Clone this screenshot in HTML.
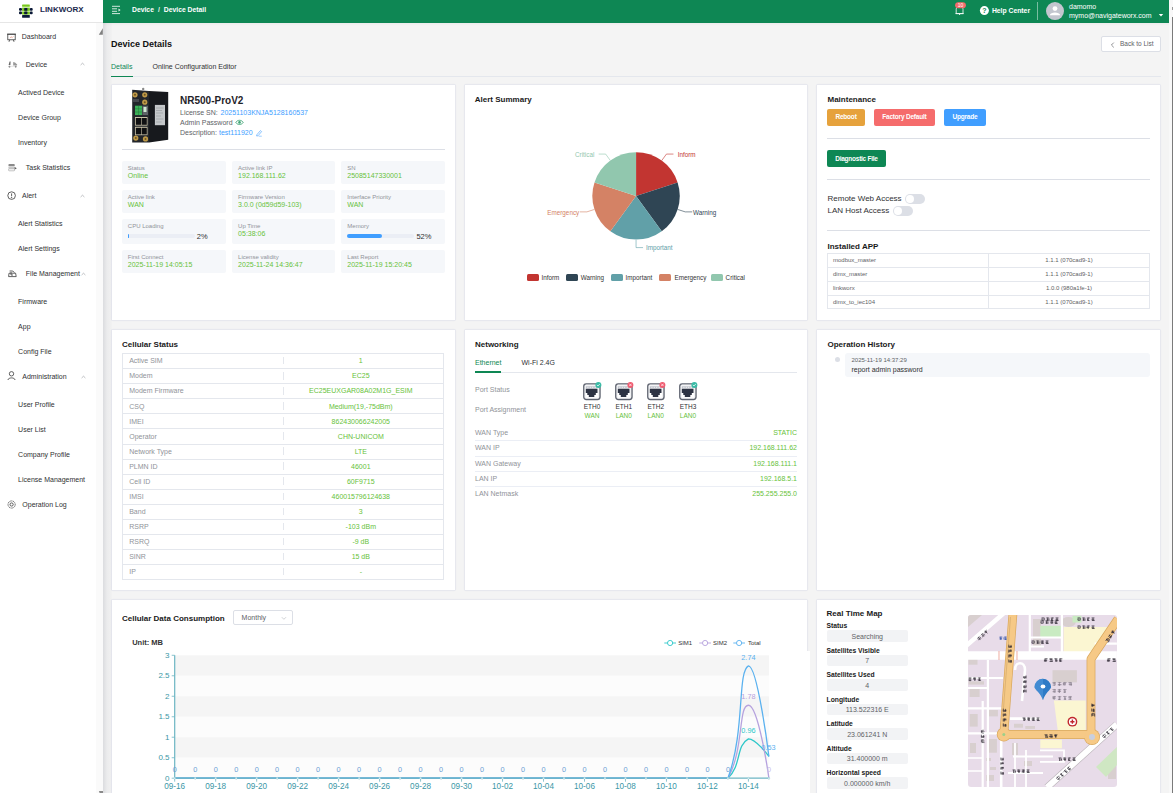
<!DOCTYPE html>
<html><head><meta charset="utf-8">
<style>
*{box-sizing:border-box;margin:0;padding:0}
html,body{width:1173px;height:793px;overflow:hidden;background:#f4f4f4;font-family:"Liberation Sans",sans-serif;color:#303133}
.a{position:absolute;white-space:nowrap}
svg{position:absolute;overflow:visible}
.card{position:absolute;background:#fff;box-shadow:0 0 0 0.5px rgba(195,200,230,.4),0 0 3px rgba(60,70,110,.06)}
</style></head>
<body>
<div class="a" style="left:103.00px;top:0.00px;width:1066.00px;height:793.00px;background:#f4f4f4;"></div>
<div class="a" style="left:103.00px;top:22.00px;width:8.50px;height:771.00px;background:linear-gradient(90deg,rgba(0,10,40,.1),rgba(0,10,40,.035) 45%,rgba(0,10,40,.01));"></div>
<div class="a" style="left:1169.00px;top:0.00px;width:4.00px;height:793.00px;background:#f8f8f8;"></div>
<div class="a" style="left:1172.00px;top:17.00px;width:1.00px;height:776.00px;background:#7a7a7a;"></div>
<div class="a" style="left:1172.00px;top:7.00px;width:1.00px;height:3.00px;background:#9a9a9a;"></div>
<div class="card" style="left:112px;top:85px;width:343px;height:235px"></div>
<div class="card" style="left:465px;top:85px;width:342px;height:235px"></div>
<div class="card" style="left:817px;top:85px;width:343px;height:235px"></div>
<div class="card" style="left:112px;top:330px;width:343px;height:260px"></div>
<div class="card" style="left:465px;top:330px;width:342px;height:260px"></div>
<div class="card" style="left:817px;top:330px;width:343px;height:260px"></div>
<div class="card" style="left:112px;top:600px;width:695px;height:200px"></div>
<div class="card" style="left:817px;top:600px;width:343px;height:200px"></div>
<div class="a" style="left:0.00px;top:0.00px;width:103.00px;height:793.00px;background:#fff;"></div>
<div class="a" style="left:0.00px;top:22.00px;width:103.00px;height:1.00px;background:#e6e6e6;"></div>
<div class="a" style="left:96.00px;top:23.00px;width:7.00px;height:770.00px;background:#fafafa;"></div>
<svg style="left:0;top:0" width="103" height="793"><path d="M102.8 28.2 L102.8 34.8 L98.8 34.8 Z" fill="#808080"/><path d="M98.9 790.9 H103 V793 H99.6 Z" fill="#8a8a8a"/></svg>
<svg style="left:0;top:0" width="40" height="22">
<rect x="22.1" y="4.4" width="7.7" height="2.4" rx="0.5" fill="#78c81a"/>
<rect x="22.1" y="7.6" width="7.7" height="7" fill="#78c81a"/>
<rect x="19" y="10.9" width="13.6" height="0.7" fill="#e8f5d8"/>
<rect x="19" y="8" width="3" height="2.8" rx="1.1" fill="#0a1838"/><rect x="24.2" y="8" width="3.2" height="2.8" rx="0.6" fill="#0a1838"/><rect x="29.8" y="8" width="2.9" height="2.8" rx="1.1" fill="#0a1838"/>
<rect x="19" y="11.6" width="3" height="2.7" rx="1.1" fill="#0a1838"/><rect x="24.2" y="11.6" width="3.2" height="2.7" rx="0.6" fill="#0a1838"/><rect x="29.8" y="11.6" width="2.9" height="2.7" rx="1.1" fill="#0a1838"/>
<rect x="22.1" y="15.1" width="7.7" height="2.7" rx="0.5" fill="#0a1838"/>
</svg>
<div class="a" style="left:40.00px;top:6.03px;font-size:8px;line-height:8px;color:#1b2a4e;font-weight:bold;">LINKWORX</div>
<div class="a" style="left:21.80px;top:33.02px;font-size:7px;line-height:7px;color:#303133;">Dashboard</div>
<div class="a" style="left:25.80px;top:60.92px;font-size:7px;line-height:7px;color:#303133;">Device</div>
<div class="a" style="left:18.10px;top:88.72px;font-size:7px;line-height:7px;color:#303133;">Actived Device</div>
<div class="a" style="left:18.10px;top:113.92px;font-size:7px;line-height:7px;color:#303133;">Device Group</div>
<div class="a" style="left:18.10px;top:138.92px;font-size:7px;line-height:7px;color:#303133;">Inventory</div>
<div class="a" style="left:25.80px;top:163.72px;font-size:7px;line-height:7px;color:#303133;">Task Statistics</div>
<div class="a" style="left:22.00px;top:192.12px;font-size:7px;line-height:7px;color:#303133;">Alert</div>
<div class="a" style="left:18.10px;top:220.12px;font-size:7px;line-height:7px;color:#303133;">Alert Statistics</div>
<div class="a" style="left:18.10px;top:245.12px;font-size:7px;line-height:7px;color:#303133;">Alert Settings</div>
<div class="a" style="left:25.80px;top:270.22px;font-size:7px;line-height:7px;color:#303133;">File Management</div>
<div class="a" style="left:18.10px;top:297.82px;font-size:7px;line-height:7px;color:#303133;">Firmware</div>
<div class="a" style="left:18.10px;top:323.22px;font-size:7px;line-height:7px;color:#303133;">App</div>
<div class="a" style="left:18.10px;top:348.22px;font-size:7px;line-height:7px;color:#303133;">Config File</div>
<div class="a" style="left:22.30px;top:373.22px;font-size:7px;line-height:7px;color:#303133;">Administration</div>
<div class="a" style="left:18.10px;top:400.82px;font-size:7px;line-height:7px;color:#303133;">User Profile</div>
<div class="a" style="left:18.10px;top:425.82px;font-size:7px;line-height:7px;color:#303133;">User List</div>
<div class="a" style="left:18.10px;top:450.72px;font-size:7px;line-height:7px;color:#303133;">Company Profile</div>
<div class="a" style="left:18.10px;top:475.72px;font-size:7px;line-height:7px;color:#303133;">License Management</div>
<div class="a" style="left:22.30px;top:501.02px;font-size:7px;line-height:7px;color:#303133;">Operation Log</div>
<svg style="left:80.3px;top:62.4px" width="5" height="4"><path d="M0.6 3 L2.5 1.2 L4.4 3" fill="none" stroke="#909399" stroke-width="0.6"/></svg>
<svg style="left:80.3px;top:193.6px" width="5" height="4"><path d="M0.6 3 L2.5 1.2 L4.4 3" fill="none" stroke="#909399" stroke-width="0.6"/></svg>
<svg style="left:80.5px;top:271.7px" width="5" height="4"><path d="M0.6 3 L2.5 1.2 L4.4 3" fill="none" stroke="#909399" stroke-width="0.6"/></svg>
<svg style="left:80.5px;top:374.7px" width="5" height="4"><path d="M0.6 3 L2.5 1.2 L4.4 3" fill="none" stroke="#909399" stroke-width="0.6"/></svg>
<svg style="left:0;top:0" width="20" height="520">
<g fill="none" stroke="#3a3a3a" stroke-width="0.8">
 <path d="M7 34.2 H16"/><rect x="7.8" y="34.2" width="7.4" height="5.6"/><path d="M9.6 39.8 L9 41.8 M13.4 39.8 L14 41.8"/><path d="M9.8 38 L11.2 36.8 L12.2 37.6 L13.4 36.4" stroke="#e07a5f" stroke-width="0.6"/>
 <path d="M9.6 61.4 L10.6 61.4 L10.4 65 L8.6 65 Z" fill="#666" stroke="none"/><circle cx="9.5" cy="66.6" r="0.9" fill="#555" stroke="none"/><path d="M13.2 62 L15 62.6 L17.2 64.4 L17 65.6 H13.2 Z" fill="#9a9a9a" stroke="none"/><circle cx="15.7" cy="66.6" r="0.9" fill="#555" stroke="none"/><path d="M8.6 66.3 H17" stroke="#d0d0d0" stroke-width="0.6"/>
 <rect x="8.4" y="163.9" width="6.4" height="2.4" rx="1" fill="#8a8a8a" stroke="none"/><rect x="8.4" y="166.6" width="6.4" height="2" fill="#c8c8c8" stroke="none"/><rect x="8.6" y="168.8" width="6" height="2" rx="0.6" fill="none" stroke="#9a9a9a" stroke-width="0.6"/><path d="M14.6 167 L16.8 168.3 L14.6 169.6 Z" fill="#555" stroke="none"/>
 <circle cx="11.6" cy="195.6" r="3.8"/><path d="M11.6 193.4 V196.2"/><circle cx="11.6" cy="197.6" r="0.3" fill="#3a3a3a"/>
 <path d="M9.6 271 H12.8 L14.4 272.6 M9 273.2 H15.6 L16.2 276.6 H8.6 Z"/><path d="M11 272 V275 L13 275" />
 <circle cx="11.5" cy="373.8" r="2.2"/><path d="M7.9 380 C8.2 377.2 14.8 377.2 15.1 380"/>
 <circle cx="11.6" cy="504.5" r="3.6" stroke-dasharray="1.2 0.6"/><circle cx="11.6" cy="504.5" r="1.6"/>
</g></svg>
<div class="a" style="left:103.00px;top:0.00px;width:1066.00px;height:22.60px;background:#0e8754;"></div>
<svg style="left:111px;top:5px" width="12" height="10"><g stroke="#e8f3ee" stroke-width="0.9"><path d="M1 1.3 H9 M1 3.8 H6 M1 6.3 H6 M1 8.6 H9"/></g><path d="M7.5 3.6 L9.6 5 L7.5 6.4 Z" fill="#e8f3ee"/></svg>
<div class="a" style="left:132.00px;top:7.24px;font-size:6.8px;line-height:6.8px;color:#ffffff;font-weight:bold;">Device</div>
<div class="a" style="left:158.00px;top:7.24px;font-size:6.8px;line-height:6.8px;color:#e6f2ec;font-weight:bold;">/</div>
<div class="a" style="left:163.80px;top:7.24px;font-size:6.8px;line-height:6.8px;color:#ffffff;font-weight:bold;">Device Detail</div>
<svg style="left:950px;top:0" width="20" height="20">
<path d="M6.2 13.6 V9.4 C6.2 7.6 7.6 6.8 9.6 6.8 C11.6 6.8 13 7.6 13 9.4 V13.6 Z" fill="none" stroke="#ffffff" stroke-width="0.8"/>
<path d="M5.4 13.6 H13.8" stroke="#ffffff" stroke-width="0.8"/><circle cx="9.6" cy="14.3" r="0.6" fill="#ffffff"/>
<rect x="5.1" y="2.2" width="10.8" height="6" rx="3" fill="#f26b6b"/>
<text x="10.5" y="7.1" font-size="5" font-family="Liberation Sans" fill="#fff" text-anchor="middle">10</text>
</svg>
<svg style="left:979px;top:5.4px" width="12" height="12"><circle cx="5.4" cy="5.6" r="4.5" fill="#fff"/>
<text x="5.4" y="8.1" font-size="7" font-family="Liberation Sans" font-weight="bold" fill="#0e8754" text-anchor="middle">?</text></svg>
<div class="a" style="left:991.90px;top:8.34px;font-size:6.8px;line-height:6.8px;color:#ffffff;font-weight:bold;">Help Center</div>
<div class="a" style="left:1037.20px;top:2.00px;width:0.80px;height:17.60px;background:rgba(255,255,255,.45);"></div>
<svg style="left:1045px;top:1px" width="20" height="20"><circle cx="10" cy="10.1" r="9" fill="#c3c6cf"/>
<circle cx="10" cy="7.6" r="2.4" fill="#fff"/><path d="M4.8 14.2 C5.4 10.6 14.6 10.6 15.2 14.2 Z" fill="#fff"/></svg>
<div class="a" style="left:1069.00px;top:3.07px;font-size:7px;line-height:7px;color:#ffffff;">damomo</div>
<div class="a" style="left:1069.00px;top:11.67px;font-size:7px;line-height:7px;color:#ffffff;">mymo@navigateworx.com</div>
<svg style="left:1158px;top:13px" width="6" height="4"><path d="M0.8 1 H5.2 L3 3.4 Z" fill="#fff"/></svg>
<div class="a" style="left:111.00px;top:39.98px;font-size:9px;line-height:9px;color:#111111;font-weight:bold;">Device Details</div>
<div class="a" style="left:111.00px;top:62.97px;font-size:7px;line-height:7px;color:#0e8754;">Details</div>
<div class="a" style="left:152.50px;top:62.97px;font-size:7px;line-height:7px;color:#303133;">Online Configuration Editor</div>
<div class="a" style="left:111.00px;top:76.00px;width:1049.50px;height:1.00px;background:#e4e7ed;"></div>
<div class="a" style="left:111.00px;top:75.50px;width:22.00px;height:1.60px;background:#0e8754;"></div>
<div class="a" style="left:1101.00px;top:36.20px;width:59.60px;height:16.20px;background:#fff;border:0.8px solid #dcdfe6;border-radius:2px"></div>
<svg style="left:1110px;top:41.6px" width="6" height="6"><path d="M3.8 0.6 L1.4 3 L3.8 5.4" fill="none" stroke="#606266" stroke-width="0.7"/></svg>
<div class="a" style="left:1120.00px;top:41.10px;font-size:6.5px;line-height:6.5px;color:#606266;">Back to List</div>
<div class="a" style="left:103.00px;top:22.60px;width:1066.00px;height:3.00px;background:linear-gradient(rgba(0,0,0,.035),rgba(0,0,0,0));"></div>
<svg style="left:126px;top:85px" width="48" height="62">
<path d="M23 5.9 L42.2 7 L42.2 54.7 L23 57.4 Z" fill="#17191d"/>
<path d="M6.2 4.7 L23 5.9 L23 57.4 L6.2 57.4 Z" fill="#23262b"/>
<rect x="28.9" y="19.9" width="10.1" height="20.3" fill="#c4c7ca"/>
<path d="M30 23 H37.6 M30 25.5 H36 M30 28 H37 M30 31 H35 M30 34 H37.4 M30 37 H35.6" stroke="#8a8d92" stroke-width="0.5"/>
<circle cx="17.2" cy="3.9" r="1.2" fill="#888"/>
<circle cx="9" cy="9.8" r="2.6" fill="#bf9a48"/><circle cx="18.75" cy="9.8" r="2.6" fill="#bf9a48"/><circle cx="18.75" cy="17.2" r="2.6" fill="#bf9a48"/>
<circle cx="9" cy="9.8" r="1" fill="#6e5524"/><circle cx="18.75" cy="9.8" r="1" fill="#6e5524"/><circle cx="18.75" cy="17.2" r="1" fill="#6e5524"/>
<path d="M8 14 V17 M10 14 V17 M12 14 V17" stroke="#9aa0a6" stroke-width="0.6"/>
<rect x="9" y="20.7" width="7" height="9.4" fill="#3cb35a"/><path d="M9 23.8 H16 M9 27 H16 M12.5 20.7 V30.1" stroke="#24743a" stroke-width="0.5"/>
<rect x="16.4" y="20.7" width="5.6" height="9.4" fill="#5f6368"/><rect x="17.5" y="22" width="3" height="5" fill="#cfe8d2"/>
<rect x="9" y="32" width="12.5" height="8.6" fill="#c9c2a8"/><rect x="9.8" y="33" width="5.2" height="6.8" fill="#0f1012"/><rect x="15.6" y="33" width="5.2" height="6.8" fill="#0f1012"/>
<rect x="9" y="41.8" width="12.5" height="8.4" fill="#c9c2a8"/><rect x="9.8" y="42.8" width="5.2" height="6.6" fill="#0f1012"/><rect x="15.6" y="42.8" width="5.2" height="6.6" fill="#0f1012"/>
<circle cx="9.8" cy="53.1" r="2.6" fill="#bf9a48"/><circle cx="19.5" cy="53.9" r="2.6" fill="#bf9a48"/>
<circle cx="9.8" cy="53.1" r="1" fill="#6e5524"/><circle cx="19.5" cy="53.9" r="1" fill="#6e5524"/>
</svg>
<div class="a" style="left:180.00px;top:95.73px;font-size:10px;line-height:10px;color:#1f2329;font-weight:bold;">NR500-ProV2</div>
<div class="a" style="left:180.00px;top:109.27px;font-size:7px;line-height:7px;color:#606266;">License SN: </div>
<div class="a" style="left:220.50px;top:109.27px;font-size:7px;line-height:7px;color:#409eff;">20251103KNJA5128160537</div>
<div class="a" style="left:180.00px;top:119.17px;font-size:7px;line-height:7px;color:#606266;">Admin Password</div>
<svg style="left:235px;top:119px" width="10" height="7"><path d="M0.8 3.4 C2.5 0.6 6.5 0.6 8.2 3.4 C6.5 6.2 2.5 6.2 0.8 3.4 Z" fill="none" stroke="#3ba272" stroke-width="0.9"/><circle cx="4.5" cy="3.4" r="1.3" fill="#3ba272"/></svg>
<div class="a" style="left:180.00px;top:129.27px;font-size:7px;line-height:7px;color:#606266;">Description: </div>
<div class="a" style="left:219.00px;top:129.27px;font-size:7px;line-height:7px;color:#409eff;">test111920</div>
<svg style="left:255px;top:128.5px" width="8" height="8"><path d="M1.8 5.8 L5.4 1.6 L6.6 2.6 L3 6.8 L1.6 7 Z" fill="none" stroke="#409eff" stroke-width="0.6"/><path d="M3.6 7.2 H6.8" stroke="#409eff" stroke-width="0.5"/></svg>
<div class="a" style="left:122.00px;top:148.80px;width:323.00px;height:1.00px;background:#dcdfe6;"></div>
<div class="a" style="left:121.80px;top:161.00px;width:104.00px;height:22.60px;background:#f5f7fa;border-radius:2px"></div>
<div class="a" style="left:127.80px;top:165.02px;font-size:6px;line-height:6px;color:#909399;">Status</div>
<div class="a" style="left:127.80px;top:172.17px;font-size:7px;line-height:7px;color:#67c23a;">Online</div>
<div class="a" style="left:232.10px;top:161.00px;width:102.60px;height:22.60px;background:#f5f7fa;border-radius:2px"></div>
<div class="a" style="left:238.10px;top:165.02px;font-size:6px;line-height:6px;color:#909399;">Active link IP</div>
<div class="a" style="left:238.10px;top:172.17px;font-size:7px;line-height:7px;color:#67c23a;">192.168.111.62</div>
<div class="a" style="left:341.30px;top:161.00px;width:103.50px;height:22.60px;background:#f5f7fa;border-radius:2px"></div>
<div class="a" style="left:347.30px;top:165.02px;font-size:6px;line-height:6px;color:#909399;">SN</div>
<div class="a" style="left:347.30px;top:172.17px;font-size:7px;line-height:7px;color:#67c23a;">25085147330001</div>
<div class="a" style="left:121.80px;top:190.00px;width:104.00px;height:22.60px;background:#f5f7fa;border-radius:2px"></div>
<div class="a" style="left:127.80px;top:194.02px;font-size:6px;line-height:6px;color:#909399;">Active link</div>
<div class="a" style="left:127.80px;top:201.17px;font-size:7px;line-height:7px;color:#67c23a;">WAN</div>
<div class="a" style="left:232.10px;top:190.00px;width:102.60px;height:22.60px;background:#f5f7fa;border-radius:2px"></div>
<div class="a" style="left:238.10px;top:194.02px;font-size:6px;line-height:6px;color:#909399;">Firmware Version</div>
<div class="a" style="left:238.10px;top:201.17px;font-size:7px;line-height:7px;color:#67c23a;">3.0.0 (0d59d59-103)</div>
<div class="a" style="left:341.30px;top:190.00px;width:103.50px;height:22.60px;background:#f5f7fa;border-radius:2px"></div>
<div class="a" style="left:347.30px;top:194.02px;font-size:6px;line-height:6px;color:#909399;">Interface Priority</div>
<div class="a" style="left:347.30px;top:201.17px;font-size:7px;line-height:7px;color:#67c23a;">WAN</div>
<div class="a" style="left:121.80px;top:219.00px;width:104.00px;height:24.70px;background:#f5f7fa;border-radius:2px"></div>
<div class="a" style="left:127.80px;top:223.02px;font-size:6px;line-height:6px;color:#909399;">CPU Loading</div>
<div class="a" style="left:232.10px;top:219.00px;width:102.60px;height:24.70px;background:#f5f7fa;border-radius:2px"></div>
<div class="a" style="left:238.10px;top:223.02px;font-size:6px;line-height:6px;color:#909399;">Up Time</div>
<div class="a" style="left:238.10px;top:230.17px;font-size:7px;line-height:7px;color:#67c23a;">05:38:06</div>
<div class="a" style="left:341.30px;top:219.00px;width:103.50px;height:24.70px;background:#f5f7fa;border-radius:2px"></div>
<div class="a" style="left:347.30px;top:223.02px;font-size:6px;line-height:6px;color:#909399;">Memory</div>
<div class="a" style="left:121.80px;top:250.00px;width:104.00px;height:22.60px;background:#f5f7fa;border-radius:2px"></div>
<div class="a" style="left:127.80px;top:254.02px;font-size:6px;line-height:6px;color:#909399;">First Connect</div>
<div class="a" style="left:127.80px;top:261.17px;font-size:7px;line-height:7px;color:#67c23a;">2025-11-19 14:05:15</div>
<div class="a" style="left:232.10px;top:250.00px;width:102.60px;height:22.60px;background:#f5f7fa;border-radius:2px"></div>
<div class="a" style="left:238.10px;top:254.02px;font-size:6px;line-height:6px;color:#909399;">License validity</div>
<div class="a" style="left:238.10px;top:261.17px;font-size:7px;line-height:7px;color:#67c23a;">2025-11-24 14:36:47</div>
<div class="a" style="left:341.30px;top:250.00px;width:103.50px;height:22.60px;background:#f5f7fa;border-radius:2px"></div>
<div class="a" style="left:347.30px;top:254.02px;font-size:6px;line-height:6px;color:#909399;">Last Report</div>
<div class="a" style="left:347.30px;top:261.17px;font-size:7px;line-height:7px;color:#67c23a;">2025-11-19 15:20:45</div>
<div class="a" style="left:127.80px;top:234.00px;width:67.00px;height:4.00px;background:#ebeef5;border-radius:2px"></div>
<div class="a" style="left:127.80px;top:234.00px;width:1.40px;height:4.00px;background:#409eff;border-radius:2px"></div>
<div class="a" style="left:196.80px;top:233.05px;font-size:7.5px;line-height:7.5px;color:#303133;">2%</div>
<div class="a" style="left:347.00px;top:234.00px;width:67.00px;height:4.00px;background:#ebeef5;border-radius:2px"></div>
<div class="a" style="left:347.00px;top:234.00px;width:35.00px;height:4.00px;background:#409eff;border-radius:2px"></div>
<div class="a" style="left:416.40px;top:233.05px;font-size:7.5px;line-height:7.5px;color:#303133;">52%</div>
<div class="a" style="left:474.80px;top:95.63px;font-size:8px;line-height:8px;color:#1a1a1a;font-weight:bold;">Alert Summary</div>
<svg style="left:0;top:0" width="1173" height="793"><path d="M636.05 195.90 L636.05 152.20 A43.7 43.7 0 0 1 677.61 182.40 Z" fill="#c23531" stroke="none"/><path d="M636.05 195.90 L677.61 182.40 A43.7 43.7 0 0 1 661.74 231.25 Z" fill="#2f4554" stroke="none"/><path d="M636.05 195.90 L661.74 231.25 A43.7 43.7 0 0 1 610.36 231.25 Z" fill="#61a0a8" stroke="none"/><path d="M636.05 195.90 L610.36 231.25 A43.7 43.7 0 0 1 594.49 182.40 Z" fill="#d48265" stroke="none"/><path d="M636.05 195.90 L594.49 182.40 A43.7 43.7 0 0 1 636.05 152.20 Z" fill="#91c7ae" stroke="none"/><path d="M661.91 160.30 L666.44 154.07 L673.44 154.07" fill="none" stroke="#c23531" stroke-width="0.6"/><path d="M677.90 209.50 L685.22 211.88 L692.22 211.88" fill="none" stroke="#2f4554" stroke-width="0.6"/><path d="M636.05 239.90 L636.05 247.60 L643.05 247.60" fill="none" stroke="#61a0a8" stroke-width="0.6"/><path d="M594.20 209.50 L586.88 211.88 L579.88 211.88" fill="none" stroke="#d48265" stroke-width="0.6"/><path d="M610.19 160.30 L605.66 154.07 L598.66 154.07" fill="none" stroke="#91c7ae" stroke-width="0.6"/></svg>
<div class="a" style="left:677.70px;top:152.47px;font-size:6.3px;line-height:6.3px;color:#c23531;">Inform</div>
<div class="a" style="left:693.00px;top:209.77px;font-size:6.3px;line-height:6.3px;color:#2f4554;">Warning</div>
<div class="a" style="left:646.00px;top:244.87px;font-size:6.3px;line-height:6.3px;color:#61a0a8;">Important</div>
<div class="a" style="left:519.20px;width:60px;text-align:right;top:209.77px;font-size:6.3px;line-height:6.3px;color:#d48265;">Emergency</div>
<div class="a" style="left:534.30px;width:60px;text-align:right;top:152.47px;font-size:6.3px;line-height:6.3px;color:#91c7ae;">Critical</div>
<div class="a" style="left:526.90px;top:274.30px;width:12.00px;height:7.00px;background:#c23531;border-radius:1.5px"></div>
<div class="a" style="left:541.40px;top:274.87px;font-size:6.3px;line-height:6.3px;color:#333333;">Inform</div>
<div class="a" style="left:566.30px;top:274.30px;width:12.00px;height:7.00px;background:#2f4554;border-radius:1.5px"></div>
<div class="a" style="left:580.80px;top:274.87px;font-size:6.3px;line-height:6.3px;color:#333333;">Warning</div>
<div class="a" style="left:610.50px;top:274.30px;width:12.00px;height:7.00px;background:#61a0a8;border-radius:1.5px"></div>
<div class="a" style="left:625.60px;top:274.87px;font-size:6.3px;line-height:6.3px;color:#333333;">Important</div>
<div class="a" style="left:659.40px;top:274.30px;width:12.00px;height:7.00px;background:#d48265;border-radius:1.5px"></div>
<div class="a" style="left:674.50px;top:274.87px;font-size:6.3px;line-height:6.3px;color:#333333;">Emergency</div>
<div class="a" style="left:711.00px;top:274.30px;width:12.00px;height:7.00px;background:#91c7ae;border-radius:1.5px"></div>
<div class="a" style="left:725.60px;top:274.87px;font-size:6.3px;line-height:6.3px;color:#333333;">Critical</div>
<div class="a" style="left:827.50px;top:95.63px;font-size:8px;line-height:8px;color:#1a1a1a;font-weight:bold;">Maintenance</div>
<div class="a" style="left:827.20px;top:109.20px;width:37.60px;height:16.40px;background:#e6a23c;border-radius:2px"></div>
<div class="a" style="left:806.00px;width:80px;text-align:center;top:114.00px;font-size:6.5px;line-height:6.5px;color:#ffffff;font-weight:bold;letter-spacing:-0.2px;">Reboot</div>
<div class="a" style="left:874.00px;top:109.20px;width:60.90px;height:16.40px;background:#f56c6c;border-radius:2px"></div>
<div class="a" style="left:864.45px;width:80px;text-align:center;top:114.00px;font-size:6.5px;line-height:6.5px;color:#ffffff;font-weight:bold;letter-spacing:-0.2px;">Factory Default</div>
<div class="a" style="left:944.10px;top:109.20px;width:41.60px;height:16.40px;background:#409eff;border-radius:2px"></div>
<div class="a" style="left:924.90px;width:80px;text-align:center;top:114.00px;font-size:6.5px;line-height:6.5px;color:#ffffff;font-weight:bold;letter-spacing:-0.2px;">Upgrade</div>
<div class="a" style="left:827.00px;top:137.80px;width:323.00px;height:0.80px;background:#dcdfe6;"></div>
<div class="a" style="left:827.20px;top:150.10px;width:58.60px;height:16.60px;background:#0e8754;border-radius:2px"></div>
<div class="a" style="left:816.50px;width:80px;text-align:center;top:155.70px;font-size:6.5px;line-height:6.5px;color:#ffffff;font-weight:bold;letter-spacing:-0.25px;">Diagnostic File</div>
<div class="a" style="left:827.00px;top:178.60px;width:323.00px;height:0.80px;background:#dcdfe6;"></div>
<div class="a" style="left:827.50px;top:194.93px;font-size:8px;line-height:8px;color:#303133;">Remote Web Access</div>
<div class="a" style="left:827.50px;top:207.03px;font-size:8px;line-height:8px;color:#303133;">LAN Host Access</div>
<div class="a" style="left:905.40px;top:194.20px;width:19.60px;height:9.60px;background:#dcdfe6;border-radius:5px"></div>
<div class="a" style="left:906.30px;top:195.10px;width:7.8px;height:7.8px;border-radius:50%;background:#fff"></div>
<div class="a" style="left:893.00px;top:206.10px;width:19.60px;height:9.60px;background:#dcdfe6;border-radius:5px"></div>
<div class="a" style="left:893.90px;top:207.00px;width:7.8px;height:7.8px;border-radius:50%;background:#fff"></div>
<div class="a" style="left:827.00px;top:229.80px;width:323.00px;height:0.80px;background:#dcdfe6;"></div>
<div class="a" style="left:827.50px;top:242.93px;font-size:8px;line-height:8px;color:#1a1a1a;font-weight:bold;">Installed APP</div>
<div class="a" style="left:827.10px;top:253.20px;width:322.50px;height:56.20px;background:#fff;border:0.8px solid #e4e7ed"></div>
<div class="a" style="left:827.10px;top:267.30px;width:322.50px;height:0.80px;background:#e4e7ed;"></div>
<div class="a" style="left:827.10px;top:281.30px;width:322.50px;height:0.80px;background:#e4e7ed;"></div>
<div class="a" style="left:827.10px;top:295.30px;width:322.50px;height:0.80px;background:#e4e7ed;"></div>
<div class="a" style="left:988.30px;top:253.20px;width:0.80px;height:56.20px;background:#e4e7ed;"></div>
<div class="a" style="left:833.00px;top:257.22px;font-size:6px;line-height:6px;color:#606266;">modbux_master</div>
<div class="a" style="left:1019.00px;width:100px;text-align:center;top:257.22px;font-size:6px;line-height:6px;color:#606266;">1.1.1 (070cad9-1)</div>
<div class="a" style="left:833.00px;top:271.27px;font-size:6px;line-height:6px;color:#606266;">dimx_master</div>
<div class="a" style="left:1019.00px;width:100px;text-align:center;top:271.27px;font-size:6px;line-height:6px;color:#606266;">1.1.1 (070cad9-1)</div>
<div class="a" style="left:833.00px;top:285.32px;font-size:6px;line-height:6px;color:#606266;">linkworx</div>
<div class="a" style="left:1019.00px;width:100px;text-align:center;top:285.32px;font-size:6px;line-height:6px;color:#606266;">1.0.0 (980a1fe-1)</div>
<div class="a" style="left:833.00px;top:299.37px;font-size:6px;line-height:6px;color:#606266;">dimx_to_iec104</div>
<div class="a" style="left:1019.00px;width:100px;text-align:center;top:299.37px;font-size:6px;line-height:6px;color:#606266;">1.1.1 (070cad9-1)</div>
<div class="a" style="left:122.00px;top:340.73px;font-size:8px;line-height:8px;color:#1a1a1a;font-weight:bold;">Cellular Status</div>
<div class="a" style="left:122.30px;top:353.10px;width:322.20px;height:226.85px;background:#fff;border:0.8px solid #e4e7ed"></div>
<div class="a" style="left:283.10px;top:356.90px;width:0.70px;height:7.60px;background:#e4e7ed;"></div>
<div class="a" style="left:129.20px;top:357.31px;font-size:7px;line-height:7px;color:#909399;">Active SIM</div>
<div class="a" style="left:280.80px;width:160px;text-align:center;top:357.31px;font-size:7px;line-height:7px;color:#67c23a;">1</div>
<div class="a" style="left:122.30px;top:368.17px;width:322.20px;height:0.80px;background:#e4e7ed;"></div>
<div class="a" style="left:283.10px;top:371.97px;width:0.70px;height:7.60px;background:#e4e7ed;"></div>
<div class="a" style="left:129.20px;top:372.38px;font-size:7px;line-height:7px;color:#909399;">Modem</div>
<div class="a" style="left:280.80px;width:160px;text-align:center;top:372.38px;font-size:7px;line-height:7px;color:#67c23a;">EC25</div>
<div class="a" style="left:122.30px;top:383.24px;width:322.20px;height:0.80px;background:#e4e7ed;"></div>
<div class="a" style="left:283.10px;top:387.04px;width:0.70px;height:7.60px;background:#e4e7ed;"></div>
<div class="a" style="left:129.20px;top:387.45px;font-size:7px;line-height:7px;color:#909399;">Modem Firmware</div>
<div class="a" style="left:280.80px;width:160px;text-align:center;top:387.45px;font-size:7px;line-height:7px;color:#67c23a;">EC25EUXGAR08A02M1G_ESIM</div>
<div class="a" style="left:122.30px;top:398.31px;width:322.20px;height:0.80px;background:#e4e7ed;"></div>
<div class="a" style="left:283.10px;top:402.11px;width:0.70px;height:7.60px;background:#e4e7ed;"></div>
<div class="a" style="left:129.20px;top:402.52px;font-size:7px;line-height:7px;color:#909399;">CSQ</div>
<div class="a" style="left:280.80px;width:160px;text-align:center;top:402.52px;font-size:7px;line-height:7px;color:#67c23a;">Medium(19,-75dBm)</div>
<div class="a" style="left:122.30px;top:413.38px;width:322.20px;height:0.80px;background:#e4e7ed;"></div>
<div class="a" style="left:283.10px;top:417.18px;width:0.70px;height:7.60px;background:#e4e7ed;"></div>
<div class="a" style="left:129.20px;top:417.59px;font-size:7px;line-height:7px;color:#909399;">IMEI</div>
<div class="a" style="left:280.80px;width:160px;text-align:center;top:417.59px;font-size:7px;line-height:7px;color:#67c23a;">862430066242005</div>
<div class="a" style="left:122.30px;top:428.45px;width:322.20px;height:0.80px;background:#e4e7ed;"></div>
<div class="a" style="left:283.10px;top:432.25px;width:0.70px;height:7.60px;background:#e4e7ed;"></div>
<div class="a" style="left:129.20px;top:432.66px;font-size:7px;line-height:7px;color:#909399;">Operator</div>
<div class="a" style="left:280.80px;width:160px;text-align:center;top:432.66px;font-size:7px;line-height:7px;color:#67c23a;">CHN-UNICOM</div>
<div class="a" style="left:122.30px;top:443.52px;width:322.20px;height:0.80px;background:#e4e7ed;"></div>
<div class="a" style="left:283.10px;top:447.32px;width:0.70px;height:7.60px;background:#e4e7ed;"></div>
<div class="a" style="left:129.20px;top:447.73px;font-size:7px;line-height:7px;color:#909399;">Network Type</div>
<div class="a" style="left:280.80px;width:160px;text-align:center;top:447.73px;font-size:7px;line-height:7px;color:#67c23a;">LTE</div>
<div class="a" style="left:122.30px;top:458.59px;width:322.20px;height:0.80px;background:#e4e7ed;"></div>
<div class="a" style="left:283.10px;top:462.39px;width:0.70px;height:7.60px;background:#e4e7ed;"></div>
<div class="a" style="left:129.20px;top:462.80px;font-size:7px;line-height:7px;color:#909399;">PLMN ID</div>
<div class="a" style="left:280.80px;width:160px;text-align:center;top:462.80px;font-size:7px;line-height:7px;color:#67c23a;">46001</div>
<div class="a" style="left:122.30px;top:473.66px;width:322.20px;height:0.80px;background:#e4e7ed;"></div>
<div class="a" style="left:283.10px;top:477.46px;width:0.70px;height:7.60px;background:#e4e7ed;"></div>
<div class="a" style="left:129.20px;top:477.87px;font-size:7px;line-height:7px;color:#909399;">Cell ID</div>
<div class="a" style="left:280.80px;width:160px;text-align:center;top:477.87px;font-size:7px;line-height:7px;color:#67c23a;">60F9715</div>
<div class="a" style="left:122.30px;top:488.73px;width:322.20px;height:0.80px;background:#e4e7ed;"></div>
<div class="a" style="left:283.10px;top:492.53px;width:0.70px;height:7.60px;background:#e4e7ed;"></div>
<div class="a" style="left:129.20px;top:492.94px;font-size:7px;line-height:7px;color:#909399;">IMSI</div>
<div class="a" style="left:280.80px;width:160px;text-align:center;top:492.94px;font-size:7px;line-height:7px;color:#67c23a;">460015796124638</div>
<div class="a" style="left:122.30px;top:503.80px;width:322.20px;height:0.80px;background:#e4e7ed;"></div>
<div class="a" style="left:283.10px;top:507.60px;width:0.70px;height:7.60px;background:#e4e7ed;"></div>
<div class="a" style="left:129.20px;top:508.01px;font-size:7px;line-height:7px;color:#909399;">Band</div>
<div class="a" style="left:280.80px;width:160px;text-align:center;top:508.01px;font-size:7px;line-height:7px;color:#67c23a;">3</div>
<div class="a" style="left:122.30px;top:518.87px;width:322.20px;height:0.80px;background:#e4e7ed;"></div>
<div class="a" style="left:283.10px;top:522.67px;width:0.70px;height:7.60px;background:#e4e7ed;"></div>
<div class="a" style="left:129.20px;top:523.08px;font-size:7px;line-height:7px;color:#909399;">RSRP</div>
<div class="a" style="left:280.80px;width:160px;text-align:center;top:523.08px;font-size:7px;line-height:7px;color:#67c23a;">-103 dBm</div>
<div class="a" style="left:122.30px;top:533.94px;width:322.20px;height:0.80px;background:#e4e7ed;"></div>
<div class="a" style="left:283.10px;top:537.74px;width:0.70px;height:7.60px;background:#e4e7ed;"></div>
<div class="a" style="left:129.20px;top:538.15px;font-size:7px;line-height:7px;color:#909399;">RSRQ</div>
<div class="a" style="left:280.80px;width:160px;text-align:center;top:538.15px;font-size:7px;line-height:7px;color:#67c23a;">-9 dB</div>
<div class="a" style="left:122.30px;top:549.01px;width:322.20px;height:0.80px;background:#e4e7ed;"></div>
<div class="a" style="left:283.10px;top:552.81px;width:0.70px;height:7.60px;background:#e4e7ed;"></div>
<div class="a" style="left:129.20px;top:553.22px;font-size:7px;line-height:7px;color:#909399;">SINR</div>
<div class="a" style="left:280.80px;width:160px;text-align:center;top:553.22px;font-size:7px;line-height:7px;color:#67c23a;">15 dB</div>
<div class="a" style="left:122.30px;top:564.08px;width:322.20px;height:0.80px;background:#e4e7ed;"></div>
<div class="a" style="left:283.10px;top:567.88px;width:0.70px;height:7.60px;background:#e4e7ed;"></div>
<div class="a" style="left:129.20px;top:568.29px;font-size:7px;line-height:7px;color:#909399;">IP</div>
<div class="a" style="left:280.80px;width:160px;text-align:center;top:568.29px;font-size:7px;line-height:7px;color:#67c23a;">-</div>
<div class="a" style="left:475.00px;top:341.03px;font-size:8px;line-height:8px;color:#1a1a1a;font-weight:bold;">Networking</div>
<div class="a" style="left:475.00px;top:359.07px;font-size:7px;line-height:7px;color:#0e8754;">Ethernet</div>
<div class="a" style="left:521.50px;top:359.07px;font-size:7px;line-height:7px;color:#303133;">Wi-Fi 2.4G</div>
<div class="a" style="left:475.00px;top:371.80px;width:322.00px;height:0.90px;background:#e4e7ed;"></div>
<div class="a" style="left:475.00px;top:371.40px;width:26.40px;height:1.50px;background:#0e8754;"></div>
<div class="a" style="left:475.00px;top:386.07px;font-size:7px;line-height:7px;color:#909399;">Port Status</div>
<div class="a" style="left:475.00px;top:406.07px;font-size:7px;line-height:7px;color:#909399;">Port Assignment</div>
<svg style="left:583.20px;top:382.6px" width="22" height="18">
<rect x="0.8" y="0.9" width="16.2" height="15.6" rx="2.4" fill="#fff" stroke="#5f6470" stroke-width="1.4"/>
<rect x="2.1" y="2.2" width="13.6" height="13" rx="1" fill="none" stroke="#dcdee4" stroke-width="0.5"/>
<rect x="2.8" y="3.2" width="11.7" height="2.2" fill="#c3c6ce"/>
<circle cx="4.9" cy="4.3" r="0.55" fill="#fff"/><circle cx="7.3" cy="4.3" r="0.55" fill="#fff"/><circle cx="9.7" cy="4.3" r="0.55" fill="#fff"/><circle cx="12.2" cy="4.3" r="0.55" fill="#fff"/>
<path d="M2.8 5.7 H14.5 V9.9 H12.8 V11.9 H11.3 V13.9 H5.8 V11.9 H4.3 V9.9 H2.8 Z" fill="#2d3343"/>
<circle cx="15.4" cy="1.9" r="3" fill="#3bbba6"/>
<path d="M13.9 1.9 L15 3 L16.9 0.9" fill="none" stroke="#fff" stroke-width="0.7"/>
</svg>
<div class="a" style="left:577.00px;width:30px;text-align:center;top:403.90px;font-size:6.5px;line-height:6.5px;color:#303133;">ETH0</div>
<div class="a" style="left:577.00px;width:30px;text-align:center;top:412.90px;font-size:6.5px;line-height:6.5px;color:#67c23a;">WAN</div>
<svg style="left:615.00px;top:382.6px" width="22" height="18">
<rect x="0.8" y="0.9" width="16.2" height="15.6" rx="2.4" fill="#fff" stroke="#5f6470" stroke-width="1.4"/>
<rect x="2.1" y="2.2" width="13.6" height="13" rx="1" fill="none" stroke="#dcdee4" stroke-width="0.5"/>
<rect x="2.8" y="3.2" width="11.7" height="2.2" fill="#c3c6ce"/>
<circle cx="4.9" cy="4.3" r="0.55" fill="#fff"/><circle cx="7.3" cy="4.3" r="0.55" fill="#fff"/><circle cx="9.7" cy="4.3" r="0.55" fill="#fff"/><circle cx="12.2" cy="4.3" r="0.55" fill="#fff"/>
<path d="M2.8 5.7 H14.5 V9.9 H12.8 V11.9 H11.3 V13.9 H5.8 V11.9 H4.3 V9.9 H2.8 Z" fill="#2d3343"/>
<circle cx="15.4" cy="1.9" r="3" fill="#ef5a6f"/>
<path d="M14.2 0.7 L16.6 3.1 M16.6 0.7 L14.2 3.1" fill="none" stroke="#fff" stroke-width="0.7"/>
</svg>
<div class="a" style="left:608.80px;width:30px;text-align:center;top:403.90px;font-size:6.5px;line-height:6.5px;color:#303133;">ETH1</div>
<div class="a" style="left:608.80px;width:30px;text-align:center;top:412.90px;font-size:6.5px;line-height:6.5px;color:#67c23a;">LAN0</div>
<svg style="left:646.90px;top:382.6px" width="22" height="18">
<rect x="0.8" y="0.9" width="16.2" height="15.6" rx="2.4" fill="#fff" stroke="#5f6470" stroke-width="1.4"/>
<rect x="2.1" y="2.2" width="13.6" height="13" rx="1" fill="none" stroke="#dcdee4" stroke-width="0.5"/>
<rect x="2.8" y="3.2" width="11.7" height="2.2" fill="#c3c6ce"/>
<circle cx="4.9" cy="4.3" r="0.55" fill="#fff"/><circle cx="7.3" cy="4.3" r="0.55" fill="#fff"/><circle cx="9.7" cy="4.3" r="0.55" fill="#fff"/><circle cx="12.2" cy="4.3" r="0.55" fill="#fff"/>
<path d="M2.8 5.7 H14.5 V9.9 H12.8 V11.9 H11.3 V13.9 H5.8 V11.9 H4.3 V9.9 H2.8 Z" fill="#2d3343"/>
<circle cx="15.4" cy="1.9" r="3" fill="#ef5a6f"/>
<path d="M14.2 0.7 L16.6 3.1 M16.6 0.7 L14.2 3.1" fill="none" stroke="#fff" stroke-width="0.7"/>
</svg>
<div class="a" style="left:640.70px;width:30px;text-align:center;top:403.90px;font-size:6.5px;line-height:6.5px;color:#303133;">ETH2</div>
<div class="a" style="left:640.70px;width:30px;text-align:center;top:412.90px;font-size:6.5px;line-height:6.5px;color:#67c23a;">LAN0</div>
<svg style="left:679.20px;top:382.6px" width="22" height="18">
<rect x="0.8" y="0.9" width="16.2" height="15.6" rx="2.4" fill="#fff" stroke="#5f6470" stroke-width="1.4"/>
<rect x="2.1" y="2.2" width="13.6" height="13" rx="1" fill="none" stroke="#dcdee4" stroke-width="0.5"/>
<rect x="2.8" y="3.2" width="11.7" height="2.2" fill="#c3c6ce"/>
<circle cx="4.9" cy="4.3" r="0.55" fill="#fff"/><circle cx="7.3" cy="4.3" r="0.55" fill="#fff"/><circle cx="9.7" cy="4.3" r="0.55" fill="#fff"/><circle cx="12.2" cy="4.3" r="0.55" fill="#fff"/>
<path d="M2.8 5.7 H14.5 V9.9 H12.8 V11.9 H11.3 V13.9 H5.8 V11.9 H4.3 V9.9 H2.8 Z" fill="#2d3343"/>
<circle cx="15.4" cy="1.9" r="3" fill="#3bbba6"/>
<path d="M13.9 1.9 L15 3 L16.9 0.9" fill="none" stroke="#fff" stroke-width="0.7"/>
</svg>
<div class="a" style="left:673.00px;width:30px;text-align:center;top:403.90px;font-size:6.5px;line-height:6.5px;color:#303133;">ETH3</div>
<div class="a" style="left:673.00px;width:30px;text-align:center;top:412.90px;font-size:6.5px;line-height:6.5px;color:#67c23a;">LAN0</div>
<div class="a" style="left:475.00px;top:429.07px;font-size:7px;line-height:7px;color:#909399;">WAN Type</div>
<div class="a" style="left:697.00px;width:100px;text-align:right;top:429.07px;font-size:7px;line-height:7px;color:#67c23a;">STATIC</div>
<div class="a" style="left:475.00px;top:444.07px;font-size:7px;line-height:7px;color:#909399;">WAN IP</div>
<div class="a" style="left:697.00px;width:100px;text-align:right;top:444.07px;font-size:7px;line-height:7px;color:#67c23a;">192.168.111.62</div>
<div class="a" style="left:475.00px;top:459.87px;font-size:7px;line-height:7px;color:#909399;">WAN Gateway</div>
<div class="a" style="left:697.00px;width:100px;text-align:right;top:459.87px;font-size:7px;line-height:7px;color:#67c23a;">192.168.111.1</div>
<div class="a" style="left:475.00px;top:475.07px;font-size:7px;line-height:7px;color:#909399;">LAN IP</div>
<div class="a" style="left:697.00px;width:100px;text-align:right;top:475.07px;font-size:7px;line-height:7px;color:#67c23a;">192.168.5.1</div>
<div class="a" style="left:475.00px;top:489.97px;font-size:7px;line-height:7px;color:#909399;">LAN Netmask</div>
<div class="a" style="left:697.00px;width:100px;text-align:right;top:489.97px;font-size:7px;line-height:7px;color:#67c23a;">255.255.255.0</div>
<div class="a" style="left:475.00px;top:440.20px;width:322.00px;height:0.80px;background:#ebeef5;"></div>
<div class="a" style="left:475.00px;top:455.80px;width:322.00px;height:0.80px;background:#ebeef5;"></div>
<div class="a" style="left:475.00px;top:471.30px;width:322.00px;height:0.80px;background:#ebeef5;"></div>
<div class="a" style="left:475.00px;top:486.10px;width:322.00px;height:0.80px;background:#ebeef5;"></div>
<div class="a" style="left:827.50px;top:340.73px;font-size:8px;line-height:8px;color:#1a1a1a;font-weight:bold;">Operation History</div>
<div class="a" style="left:835px;top:357px;width:5.2px;height:5.2px;border-radius:50%;background:#dcdfe6"></div>
<div class="a" style="left:845.30px;top:353.30px;width:304.50px;height:24.00px;background:#f5f7fa;border-radius:3px"></div>
<div class="a" style="left:851.50px;top:356.72px;font-size:6px;line-height:6px;color:#606266;">2025-11-19 14:37:29</div>
<div class="a" style="left:851.50px;top:366.17px;font-size:7px;line-height:7px;color:#303133;">report admin password</div>
<div class="a" style="left:122.00px;top:614.83px;font-size:8px;line-height:8px;color:#1a1a1a;font-weight:bold;">Cellular Data Consumption</div>
<div class="a" style="left:233.30px;top:610.30px;width:59.50px;height:15.00px;background:#fff;border:0.8px solid #dcdfe6;border-radius:2px"></div>
<div class="a" style="left:241.60px;top:614.37px;font-size:7px;line-height:7px;color:#606266;">Monthly</div>
<svg style="left:281px;top:615.5px" width="6" height="5"><path d="M0.8 1.2 L2.9 3.3 L5 1.2" fill="none" stroke="#b0b3b9" stroke-width="0.6"/></svg>
<div class="a" style="left:807.00px;top:650.50px;width:3.00px;height:143.00px;background:#ffffff;"></div>
<div class="a" style="left:132.20px;top:639.25px;font-size:7.5px;line-height:7.5px;color:#333333;font-weight:bold;">Unit: MB</div>
<svg style="left:0;top:0" width="1173" height="793"><rect x="174.70" y="655.29" width="594.21" height="20.49" fill="#f5f5f5"/><rect x="174.70" y="675.78" width="594.21" height="20.48" fill="#fcfcfc"/><rect x="174.70" y="696.26" width="594.21" height="20.49" fill="#f5f5f5"/><rect x="174.70" y="716.75" width="594.21" height="20.49" fill="#fcfcfc"/><rect x="174.70" y="737.23" width="594.21" height="20.49" fill="#f5f5f5"/><rect x="174.70" y="757.72" width="594.21" height="20.49" fill="#fcfcfc"/><path d="M171.70 778.20 H174.70" stroke="#6db5c3" stroke-width="0.8"/><path d="M171.70 757.72 H174.70" stroke="#6db5c3" stroke-width="0.8"/><path d="M171.70 737.23 H174.70" stroke="#6db5c3" stroke-width="0.8"/><path d="M171.70 716.75 H174.70" stroke="#6db5c3" stroke-width="0.8"/><path d="M171.70 696.26 H174.70" stroke="#6db5c3" stroke-width="0.8"/><path d="M171.70 675.78 H174.70" stroke="#6db5c3" stroke-width="0.8"/><path d="M171.70 655.29 H174.70" stroke="#6db5c3" stroke-width="0.8"/><path d="M174.70 778.20 V781.70" stroke="#6db5c3" stroke-width="0.8"/><path d="M195.19 778.20 V779.40" stroke="#6db5c3" stroke-width="0.8"/><path d="M215.68 778.20 V781.70" stroke="#6db5c3" stroke-width="0.8"/><path d="M236.17 778.20 V779.40" stroke="#6db5c3" stroke-width="0.8"/><path d="M256.66 778.20 V781.70" stroke="#6db5c3" stroke-width="0.8"/><path d="M277.15 778.20 V779.40" stroke="#6db5c3" stroke-width="0.8"/><path d="M297.64 778.20 V781.70" stroke="#6db5c3" stroke-width="0.8"/><path d="M318.13 778.20 V779.40" stroke="#6db5c3" stroke-width="0.8"/><path d="M338.62 778.20 V781.70" stroke="#6db5c3" stroke-width="0.8"/><path d="M359.11 778.20 V779.40" stroke="#6db5c3" stroke-width="0.8"/><path d="M379.60 778.20 V781.70" stroke="#6db5c3" stroke-width="0.8"/><path d="M400.09 778.20 V779.40" stroke="#6db5c3" stroke-width="0.8"/><path d="M420.58 778.20 V781.70" stroke="#6db5c3" stroke-width="0.8"/><path d="M441.07 778.20 V779.40" stroke="#6db5c3" stroke-width="0.8"/><path d="M461.56 778.20 V781.70" stroke="#6db5c3" stroke-width="0.8"/><path d="M482.05 778.20 V779.40" stroke="#6db5c3" stroke-width="0.8"/><path d="M502.54 778.20 V781.70" stroke="#6db5c3" stroke-width="0.8"/><path d="M523.03 778.20 V779.40" stroke="#6db5c3" stroke-width="0.8"/><path d="M543.52 778.20 V781.70" stroke="#6db5c3" stroke-width="0.8"/><path d="M564.01 778.20 V779.40" stroke="#6db5c3" stroke-width="0.8"/><path d="M584.50 778.20 V781.70" stroke="#6db5c3" stroke-width="0.8"/><path d="M604.99 778.20 V779.40" stroke="#6db5c3" stroke-width="0.8"/><path d="M625.48 778.20 V781.70" stroke="#6db5c3" stroke-width="0.8"/><path d="M645.97 778.20 V779.40" stroke="#6db5c3" stroke-width="0.8"/><path d="M666.46 778.20 V781.70" stroke="#6db5c3" stroke-width="0.8"/><path d="M686.95 778.20 V779.40" stroke="#6db5c3" stroke-width="0.8"/><path d="M707.44 778.20 V781.70" stroke="#6db5c3" stroke-width="0.8"/><path d="M727.93 778.20 V779.40" stroke="#6db5c3" stroke-width="0.8"/><path d="M748.42 778.20 V781.70" stroke="#6db5c3" stroke-width="0.8"/><path d="M768.91 778.20 V779.40" stroke="#6db5c3" stroke-width="0.8"/><path d="M174.70 778.20 C174.70 778.20 184.94 778.20 195.19 778.20 C205.44 778.20 205.44 778.20 215.68 778.20 C225.92 778.20 225.92 778.20 236.17 778.20 C246.41 778.20 246.41 778.20 256.66 778.20 C266.90 778.20 266.90 778.20 277.15 778.20 C287.39 778.20 287.39 778.20 297.64 778.20 C307.88 778.20 307.88 778.20 318.13 778.20 C328.38 778.20 328.38 778.20 338.62 778.20 C348.87 778.20 348.87 778.20 359.11 778.20 C369.36 778.20 369.36 778.20 379.60 778.20 C389.84 778.20 389.84 778.20 400.09 778.20 C410.33 778.20 410.33 778.20 420.58 778.20 C430.82 778.20 430.82 778.20 441.07 778.20 C451.31 778.20 451.31 778.20 461.56 778.20 C471.80 778.20 471.80 778.20 482.05 778.20 C492.29 778.20 492.29 778.20 502.54 778.20 C512.78 778.20 512.78 778.20 523.03 778.20 C533.27 778.20 533.27 778.20 543.52 778.20 C553.76 778.20 553.76 778.20 564.01 778.20 C574.25 778.20 574.25 778.20 584.50 778.20 C594.75 778.20 594.75 778.20 604.99 778.20 C615.24 778.20 615.24 778.20 625.48 778.20 C635.73 778.20 635.73 778.20 645.97 778.20 C656.22 778.20 656.22 778.20 666.46 778.20 C676.71 778.20 676.71 778.20 686.95 778.20 C697.20 778.20 697.20 778.20 707.44 778.20 C717.68 778.20 721.45 778.20 727.93 778.20 C741.94 764.75 735.69 745.62 748.42 738.87 C756.18 738.87 768.91 756.49 768.91 756.49" fill="none" stroke="#2ec7c9" stroke-width="1.3"/><path d="M174.70 778.20 C174.70 778.20 184.94 778.20 195.19 778.20 C205.44 778.20 205.44 778.20 215.68 778.20 C225.92 778.20 225.92 778.20 236.17 778.20 C246.41 778.20 246.41 778.20 256.66 778.20 C266.90 778.20 266.90 778.20 277.15 778.20 C287.39 778.20 287.39 778.20 297.64 778.20 C307.88 778.20 307.88 778.20 318.13 778.20 C328.38 778.20 328.38 778.20 338.62 778.20 C348.87 778.20 348.87 778.20 359.11 778.20 C369.36 778.20 369.36 778.20 379.60 778.20 C389.84 778.20 389.84 778.20 400.09 778.20 C410.33 778.20 410.33 778.20 420.58 778.20 C430.82 778.20 430.82 778.20 441.07 778.20 C451.31 778.20 451.31 778.20 461.56 778.20 C471.80 778.20 471.80 778.20 482.05 778.20 C492.29 778.20 492.29 778.20 502.54 778.20 C512.78 778.20 512.78 778.20 523.03 778.20 C533.27 778.20 533.27 778.20 543.52 778.20 C553.76 778.20 553.76 778.20 564.01 778.20 C574.25 778.20 574.25 778.20 584.50 778.20 C594.75 778.20 594.75 778.20 604.99 778.20 C615.24 778.20 615.24 778.20 625.48 778.20 C635.73 778.20 635.73 778.20 645.97 778.20 C656.22 778.20 656.22 778.20 666.46 778.20 C676.71 778.20 676.71 778.20 686.95 778.20 C697.20 778.20 697.20 778.20 707.44 778.20 C717.68 778.20 723.57 778.20 727.93 778.20 C744.06 749.50 738.17 705.27 748.42 705.27 C758.66 705.27 768.91 778.20 768.91 778.20" fill="none" stroke="#b6a2de" stroke-width="1.3"/><path d="M174.70 778.20 C174.70 778.20 184.94 778.20 195.19 778.20 C205.44 778.20 205.44 778.20 215.68 778.20 C225.92 778.20 225.92 778.20 236.17 778.20 C246.41 778.20 246.41 778.20 256.66 778.20 C266.90 778.20 266.90 778.20 277.15 778.20 C287.39 778.20 287.39 778.20 297.64 778.20 C307.88 778.20 307.88 778.20 318.13 778.20 C328.38 778.20 328.38 778.20 338.62 778.20 C348.87 778.20 348.87 778.20 359.11 778.20 C369.36 778.20 369.36 778.20 379.60 778.20 C389.84 778.20 389.84 778.20 400.09 778.20 C410.33 778.20 410.33 778.20 420.58 778.20 C430.82 778.20 430.82 778.20 441.07 778.20 C451.31 778.20 451.31 778.20 461.56 778.20 C471.80 778.20 471.80 778.20 482.05 778.20 C492.29 778.20 492.29 778.20 502.54 778.20 C512.78 778.20 512.78 778.20 523.03 778.20 C533.27 778.20 533.27 778.20 543.52 778.20 C553.76 778.20 553.76 778.20 564.01 778.20 C574.25 778.20 574.25 778.20 584.50 778.20 C594.75 778.20 594.75 778.20 604.99 778.20 C615.24 778.20 615.24 778.20 625.48 778.20 C635.73 778.20 635.73 778.20 645.97 778.20 C656.22 778.20 656.22 778.20 666.46 778.20 C676.71 778.20 676.71 778.20 686.95 778.20 C697.20 778.20 697.20 778.20 707.44 778.20 C717.68 778.20 724.81 778.20 727.93 778.20 C745.30 730.62 737.12 671.93 748.42 665.94 C757.61 665.94 768.91 756.49 768.91 756.49" fill="none" stroke="#5ab1ef" stroke-width="1.3"/><path d="M174.70 655.29 V778.20 H768.91" fill="none" stroke="#6db5c3" stroke-width="1.2"/><circle cx="174.70" cy="778.20" r="0.9" fill="#eaf6f8" stroke="#8cc6d2" stroke-width="0.4"/><circle cx="195.19" cy="778.20" r="0.9" fill="#eaf6f8" stroke="#8cc6d2" stroke-width="0.4"/><circle cx="215.68" cy="778.20" r="0.9" fill="#eaf6f8" stroke="#8cc6d2" stroke-width="0.4"/><circle cx="236.17" cy="778.20" r="0.9" fill="#eaf6f8" stroke="#8cc6d2" stroke-width="0.4"/><circle cx="256.66" cy="778.20" r="0.9" fill="#eaf6f8" stroke="#8cc6d2" stroke-width="0.4"/><circle cx="277.15" cy="778.20" r="0.9" fill="#eaf6f8" stroke="#8cc6d2" stroke-width="0.4"/><circle cx="297.64" cy="778.20" r="0.9" fill="#eaf6f8" stroke="#8cc6d2" stroke-width="0.4"/><circle cx="318.13" cy="778.20" r="0.9" fill="#eaf6f8" stroke="#8cc6d2" stroke-width="0.4"/><circle cx="338.62" cy="778.20" r="0.9" fill="#eaf6f8" stroke="#8cc6d2" stroke-width="0.4"/><circle cx="359.11" cy="778.20" r="0.9" fill="#eaf6f8" stroke="#8cc6d2" stroke-width="0.4"/><circle cx="379.60" cy="778.20" r="0.9" fill="#eaf6f8" stroke="#8cc6d2" stroke-width="0.4"/><circle cx="400.09" cy="778.20" r="0.9" fill="#eaf6f8" stroke="#8cc6d2" stroke-width="0.4"/><circle cx="420.58" cy="778.20" r="0.9" fill="#eaf6f8" stroke="#8cc6d2" stroke-width="0.4"/><circle cx="441.07" cy="778.20" r="0.9" fill="#eaf6f8" stroke="#8cc6d2" stroke-width="0.4"/><circle cx="461.56" cy="778.20" r="0.9" fill="#eaf6f8" stroke="#8cc6d2" stroke-width="0.4"/><circle cx="482.05" cy="778.20" r="0.9" fill="#eaf6f8" stroke="#8cc6d2" stroke-width="0.4"/><circle cx="502.54" cy="778.20" r="0.9" fill="#eaf6f8" stroke="#8cc6d2" stroke-width="0.4"/><circle cx="523.03" cy="778.20" r="0.9" fill="#eaf6f8" stroke="#8cc6d2" stroke-width="0.4"/><circle cx="543.52" cy="778.20" r="0.9" fill="#eaf6f8" stroke="#8cc6d2" stroke-width="0.4"/><circle cx="564.01" cy="778.20" r="0.9" fill="#eaf6f8" stroke="#8cc6d2" stroke-width="0.4"/><circle cx="584.50" cy="778.20" r="0.9" fill="#eaf6f8" stroke="#8cc6d2" stroke-width="0.4"/><circle cx="604.99" cy="778.20" r="0.9" fill="#eaf6f8" stroke="#8cc6d2" stroke-width="0.4"/><circle cx="625.48" cy="778.20" r="0.9" fill="#eaf6f8" stroke="#8cc6d2" stroke-width="0.4"/><circle cx="645.97" cy="778.20" r="0.9" fill="#eaf6f8" stroke="#8cc6d2" stroke-width="0.4"/><circle cx="666.46" cy="778.20" r="0.9" fill="#eaf6f8" stroke="#8cc6d2" stroke-width="0.4"/><circle cx="686.95" cy="778.20" r="0.9" fill="#eaf6f8" stroke="#8cc6d2" stroke-width="0.4"/><circle cx="707.44" cy="778.20" r="0.9" fill="#eaf6f8" stroke="#8cc6d2" stroke-width="0.4"/><circle cx="727.93" cy="778.20" r="0.9" fill="#eaf6f8" stroke="#8cc6d2" stroke-width="0.4"/><circle cx="748.42" cy="778.20" r="0.9" fill="#eaf6f8" stroke="#8cc6d2" stroke-width="0.4"/><circle cx="768.91" cy="778.20" r="0.9" fill="#eaf6f8" stroke="#8cc6d2" stroke-width="0.4"/></svg>
<div class="a" style="left:139.50px;width:30px;text-align:right;top:774.63px;font-size:8px;line-height:8px;color:#3b97a6;">0</div>
<div class="a" style="left:139.50px;width:30px;text-align:right;top:754.14px;font-size:8px;line-height:8px;color:#3b97a6;">0.5</div>
<div class="a" style="left:139.50px;width:30px;text-align:right;top:733.66px;font-size:8px;line-height:8px;color:#3b97a6;">1</div>
<div class="a" style="left:139.50px;width:30px;text-align:right;top:713.17px;font-size:8px;line-height:8px;color:#3b97a6;">1.5</div>
<div class="a" style="left:139.50px;width:30px;text-align:right;top:692.69px;font-size:8px;line-height:8px;color:#3b97a6;">2</div>
<div class="a" style="left:139.50px;width:30px;text-align:right;top:672.20px;font-size:8px;line-height:8px;color:#3b97a6;">2.5</div>
<div class="a" style="left:139.50px;width:30px;text-align:right;top:651.72px;font-size:8px;line-height:8px;color:#3b97a6;">3</div>
<div class="a" style="left:154.70px;width:40px;text-align:center;top:782.96px;font-size:8.2px;line-height:8.2px;color:#3b97a6;">09-16</div>
<div class="a" style="left:195.68px;width:40px;text-align:center;top:782.96px;font-size:8.2px;line-height:8.2px;color:#3b97a6;">09-18</div>
<div class="a" style="left:236.66px;width:40px;text-align:center;top:782.96px;font-size:8.2px;line-height:8.2px;color:#3b97a6;">09-20</div>
<div class="a" style="left:277.64px;width:40px;text-align:center;top:782.96px;font-size:8.2px;line-height:8.2px;color:#3b97a6;">09-22</div>
<div class="a" style="left:318.62px;width:40px;text-align:center;top:782.96px;font-size:8.2px;line-height:8.2px;color:#3b97a6;">09-24</div>
<div class="a" style="left:359.60px;width:40px;text-align:center;top:782.96px;font-size:8.2px;line-height:8.2px;color:#3b97a6;">09-26</div>
<div class="a" style="left:400.58px;width:40px;text-align:center;top:782.96px;font-size:8.2px;line-height:8.2px;color:#3b97a6;">09-28</div>
<div class="a" style="left:441.56px;width:40px;text-align:center;top:782.96px;font-size:8.2px;line-height:8.2px;color:#3b97a6;">09-30</div>
<div class="a" style="left:482.54px;width:40px;text-align:center;top:782.96px;font-size:8.2px;line-height:8.2px;color:#3b97a6;">10-02</div>
<div class="a" style="left:523.52px;width:40px;text-align:center;top:782.96px;font-size:8.2px;line-height:8.2px;color:#3b97a6;">10-04</div>
<div class="a" style="left:564.50px;width:40px;text-align:center;top:782.96px;font-size:8.2px;line-height:8.2px;color:#3b97a6;">10-06</div>
<div class="a" style="left:605.48px;width:40px;text-align:center;top:782.96px;font-size:8.2px;line-height:8.2px;color:#3b97a6;">10-08</div>
<div class="a" style="left:646.46px;width:40px;text-align:center;top:782.96px;font-size:8.2px;line-height:8.2px;color:#3b97a6;">10-10</div>
<div class="a" style="left:687.44px;width:40px;text-align:center;top:782.96px;font-size:8.2px;line-height:8.2px;color:#3b97a6;">10-12</div>
<div class="a" style="left:728.42px;width:40px;text-align:center;top:782.96px;font-size:8.2px;line-height:8.2px;color:#3b97a6;">10-14</div>
<div class="a" style="left:164.70px;width:20px;text-align:center;top:766.42px;font-size:7.3px;line-height:7.3px;color:#6a9ed4;">0</div>
<div class="a" style="left:185.19px;width:20px;text-align:center;top:766.42px;font-size:7.3px;line-height:7.3px;color:#6a9ed4;">0</div>
<div class="a" style="left:205.68px;width:20px;text-align:center;top:766.42px;font-size:7.3px;line-height:7.3px;color:#6a9ed4;">0</div>
<div class="a" style="left:226.17px;width:20px;text-align:center;top:766.42px;font-size:7.3px;line-height:7.3px;color:#6a9ed4;">0</div>
<div class="a" style="left:246.66px;width:20px;text-align:center;top:766.42px;font-size:7.3px;line-height:7.3px;color:#6a9ed4;">0</div>
<div class="a" style="left:267.15px;width:20px;text-align:center;top:766.42px;font-size:7.3px;line-height:7.3px;color:#6a9ed4;">0</div>
<div class="a" style="left:287.64px;width:20px;text-align:center;top:766.42px;font-size:7.3px;line-height:7.3px;color:#6a9ed4;">0</div>
<div class="a" style="left:308.13px;width:20px;text-align:center;top:766.42px;font-size:7.3px;line-height:7.3px;color:#6a9ed4;">0</div>
<div class="a" style="left:328.62px;width:20px;text-align:center;top:766.42px;font-size:7.3px;line-height:7.3px;color:#6a9ed4;">0</div>
<div class="a" style="left:349.11px;width:20px;text-align:center;top:766.42px;font-size:7.3px;line-height:7.3px;color:#6a9ed4;">0</div>
<div class="a" style="left:369.60px;width:20px;text-align:center;top:766.42px;font-size:7.3px;line-height:7.3px;color:#6a9ed4;">0</div>
<div class="a" style="left:390.09px;width:20px;text-align:center;top:766.42px;font-size:7.3px;line-height:7.3px;color:#6a9ed4;">0</div>
<div class="a" style="left:410.58px;width:20px;text-align:center;top:766.42px;font-size:7.3px;line-height:7.3px;color:#6a9ed4;">0</div>
<div class="a" style="left:431.07px;width:20px;text-align:center;top:766.42px;font-size:7.3px;line-height:7.3px;color:#6a9ed4;">0</div>
<div class="a" style="left:451.56px;width:20px;text-align:center;top:766.42px;font-size:7.3px;line-height:7.3px;color:#6a9ed4;">0</div>
<div class="a" style="left:472.05px;width:20px;text-align:center;top:766.42px;font-size:7.3px;line-height:7.3px;color:#6a9ed4;">0</div>
<div class="a" style="left:492.54px;width:20px;text-align:center;top:766.42px;font-size:7.3px;line-height:7.3px;color:#6a9ed4;">0</div>
<div class="a" style="left:513.03px;width:20px;text-align:center;top:766.42px;font-size:7.3px;line-height:7.3px;color:#6a9ed4;">0</div>
<div class="a" style="left:533.52px;width:20px;text-align:center;top:766.42px;font-size:7.3px;line-height:7.3px;color:#6a9ed4;">0</div>
<div class="a" style="left:554.01px;width:20px;text-align:center;top:766.42px;font-size:7.3px;line-height:7.3px;color:#6a9ed4;">0</div>
<div class="a" style="left:574.50px;width:20px;text-align:center;top:766.42px;font-size:7.3px;line-height:7.3px;color:#6a9ed4;">0</div>
<div class="a" style="left:594.99px;width:20px;text-align:center;top:766.42px;font-size:7.3px;line-height:7.3px;color:#6a9ed4;">0</div>
<div class="a" style="left:615.48px;width:20px;text-align:center;top:766.42px;font-size:7.3px;line-height:7.3px;color:#6a9ed4;">0</div>
<div class="a" style="left:635.97px;width:20px;text-align:center;top:766.42px;font-size:7.3px;line-height:7.3px;color:#6a9ed4;">0</div>
<div class="a" style="left:656.46px;width:20px;text-align:center;top:766.42px;font-size:7.3px;line-height:7.3px;color:#6a9ed4;">0</div>
<div class="a" style="left:676.95px;width:20px;text-align:center;top:766.42px;font-size:7.3px;line-height:7.3px;color:#6a9ed4;">0</div>
<div class="a" style="left:697.44px;width:20px;text-align:center;top:766.42px;font-size:7.3px;line-height:7.3px;color:#6a9ed4;">0</div>
<div class="a" style="left:717.93px;width:20px;text-align:center;top:766.42px;font-size:7.3px;line-height:7.3px;color:#6a9ed4;">0</div>
<div class="a" style="left:733.42px;width:30px;text-align:center;top:654.22px;font-size:7.3px;line-height:7.3px;color:#5ab1ef;">2.74</div>
<div class="a" style="left:733.42px;width:30px;text-align:center;top:693.32px;font-size:7.3px;line-height:7.3px;color:#b6a2de;">1.78</div>
<div class="a" style="left:733.42px;width:30px;text-align:center;top:727.22px;font-size:7.3px;line-height:7.3px;color:#2ec7c9;">0.96</div>
<div class="a" style="left:753.41px;width:30px;text-align:center;top:744.02px;font-size:7.3px;line-height:7.3px;color:#5ab1ef;">0.53</div>
<div class="a" style="left:758.91px;width:20px;text-align:center;top:766.22px;font-size:7.3px;line-height:7.3px;color:#c9bde8;">0</div>
<svg style="left:663.60px;top:639px" width="13" height="8"><path d="M0.3 4 H12" stroke="#2ec7c9" stroke-width="0.9"/><circle cx="6.1" cy="4" r="2.6" fill="#fff" stroke="#2ec7c9" stroke-width="0.9"/></svg>
<div class="a" style="left:678.20px;top:640.12px;font-size:6px;line-height:6px;color:#333333;">SIM1</div>
<svg style="left:698.80px;top:639px" width="13" height="8"><path d="M0.3 4 H12" stroke="#b6a2de" stroke-width="0.9"/><circle cx="6.1" cy="4" r="2.6" fill="#fff" stroke="#b6a2de" stroke-width="0.9"/></svg>
<div class="a" style="left:713.00px;top:640.12px;font-size:6px;line-height:6px;color:#333333;">SIM2</div>
<svg style="left:733.30px;top:639px" width="13" height="8"><path d="M0.3 4 H12" stroke="#5ab1ef" stroke-width="0.9"/><circle cx="6.1" cy="4" r="2.6" fill="#fff" stroke="#5ab1ef" stroke-width="0.9"/></svg>
<div class="a" style="left:747.90px;top:640.12px;font-size:6px;line-height:6px;color:#333333;">Total</div>
<div class="a" style="left:826.60px;top:609.93px;font-size:8px;line-height:8px;color:#1a1a1a;font-weight:bold;">Real Time Map</div>
<div class="a" style="left:826.60px;top:623.39px;font-size:6.75px;line-height:6.75px;color:#1a1a1a;font-weight:bold;">Status</div>
<div class="a" style="left:826.60px;top:630.30px;width:81.30px;height:11.60px;background:#f2f3f5;border-radius:2px"></div>
<div class="a" style="left:827.25px;width:80px;text-align:center;top:632.67px;font-size:7px;line-height:7px;color:#606266;">Searching</div>
<div class="a" style="left:826.60px;top:647.89px;font-size:6.75px;line-height:6.75px;color:#1a1a1a;font-weight:bold;">Satellites Visible</div>
<div class="a" style="left:826.60px;top:654.80px;width:81.30px;height:11.60px;background:#f2f3f5;border-radius:2px"></div>
<div class="a" style="left:827.25px;width:80px;text-align:center;top:657.17px;font-size:7px;line-height:7px;color:#606266;">7</div>
<div class="a" style="left:826.60px;top:672.39px;font-size:6.75px;line-height:6.75px;color:#1a1a1a;font-weight:bold;">Satellites Used</div>
<div class="a" style="left:826.60px;top:679.30px;width:81.30px;height:11.60px;background:#f2f3f5;border-radius:2px"></div>
<div class="a" style="left:827.25px;width:80px;text-align:center;top:681.67px;font-size:7px;line-height:7px;color:#606266;">4</div>
<div class="a" style="left:826.60px;top:696.89px;font-size:6.75px;line-height:6.75px;color:#1a1a1a;font-weight:bold;">Longitude</div>
<div class="a" style="left:826.60px;top:703.80px;width:81.30px;height:11.60px;background:#f2f3f5;border-radius:2px"></div>
<div class="a" style="left:827.25px;width:80px;text-align:center;top:706.17px;font-size:7px;line-height:7px;color:#606266;">113.522316 E</div>
<div class="a" style="left:826.60px;top:721.39px;font-size:6.75px;line-height:6.75px;color:#1a1a1a;font-weight:bold;">Latitude</div>
<div class="a" style="left:826.60px;top:728.30px;width:81.30px;height:11.60px;background:#f2f3f5;border-radius:2px"></div>
<div class="a" style="left:827.25px;width:80px;text-align:center;top:730.67px;font-size:7px;line-height:7px;color:#606266;">23.061241 N</div>
<div class="a" style="left:826.60px;top:745.89px;font-size:6.75px;line-height:6.75px;color:#1a1a1a;font-weight:bold;">Altitude</div>
<div class="a" style="left:826.60px;top:752.80px;width:81.30px;height:11.60px;background:#f2f3f5;border-radius:2px"></div>
<div class="a" style="left:827.25px;width:80px;text-align:center;top:755.17px;font-size:7px;line-height:7px;color:#606266;">31.400000 m</div>
<div class="a" style="left:826.60px;top:770.39px;font-size:6.75px;line-height:6.75px;color:#1a1a1a;font-weight:bold;">Horizontal speed</div>
<div class="a" style="left:826.60px;top:777.30px;width:81.30px;height:11.60px;background:#f2f3f5;border-radius:2px"></div>
<div class="a" style="left:827.25px;width:80px;text-align:center;top:779.67px;font-size:7px;line-height:7px;color:#606266;">0.000000 km/h</div>
<div class="a" style="left:967.7px;top:614.5px;width:148.9px;height:172.5px;border-radius:3px;overflow:hidden;background:#e8dce9">
<svg style="left:0;top:0" width="148.9" height="172.5" viewBox="0 0 148.9 172.5">
<g fill="#d8cfcf">
 <path d="M0 0 H14 L0 12 Z"/>
 <rect x="0.5" y="44" width="9" height="5.7"/><rect x="0.5" y="66.3" width="15.5" height="3.3"/><rect x="1.6" y="74" width="10" height="8"/>
 <rect x="19.9" y="95" width="10" height="6.4"/><rect x="1.7" y="99" width="8" height="12.6"/><rect x="19.9" y="124" width="9" height="13.7"/><rect x="2" y="128" width="6" height="10"/>
 <rect x="18" y="143" width="5" height="3"/><rect x="22" y="152" width="6" height="3"/><rect x="18" y="160" width="8" height="6"/>
 <rect x="65" y="4" width="8" height="27"/>
 <ellipse cx="100.6" cy="6.9" rx="7.2" ry="5"/>
 <rect x="84.5" y="55.2" width="24.4" height="12.2"/>
 <rect x="46" y="108.8" width="9" height="3.9"/><rect x="57.3" y="111" width="9.7" height="2.9"/>
 <rect x="140" y="150" width="8" height="14"/><rect x="44" y="128" width="6" height="12"/><rect x="56" y="146" width="8" height="5"/>
</g>
<path d="M95.6 11.9 H141.1 L122 40.8 H95.6 Z" fill="#fbf6d2"/>
<rect x="72.3" y="10.8" width="21.1" height="11.1" fill="#c9ebc2"/>
<rect x="104.5" y="0.8" width="8.9" height="6.7" fill="#c9ebc2"/>
<path d="M85.9 85.5 H117.7 V117.3 H90 Z" fill="#fbf6d2"/>
<rect x="72.3" y="124.7" width="21.6" height="8.5" fill="#fbf6d2"/>
<path d="M128 152 L148.9 132 V150 L138 162 Z" fill="#cfe7c3"/>
<g fill="none" stroke="#ffffff">
 <path d="M-2 31 L36 -2" stroke-width="4.5"/>
 <path d="M0 40.5 H148.9" stroke-width="8.5"/>
 <path d="M47 55 C47 46 57 46 57 55 L54 86" stroke-width="2.6"/>
 <path d="M61.8 0 V44 M93.9 0 V44 M61.8 22.5 H93.9 M61.8 31.5 H76" stroke-width="2.2"/>
 <path d="M126.7 28.6 H148.9" stroke-width="2.2"/>
 <path d="M19.9 45 V172.5 M0 63 H35 M0 73 H20 M14.7 86 V172.5 M0 93.3 H35 M0 118.3 H33" stroke-width="2.2"/>
 <path d="M42 103.6 H72 M33.2 124 V172.5" stroke-width="2.6"/>
 <path d="M47 128 V172.5 M58 135 V172.5 M45 141.5 H85 M40 158 H75 M72 135.4 H96 V146.8 H72" stroke-width="1.8"/>
 <path d="M0 143 H14 M0 156 H14" stroke-width="1.6"/>
</g>
<path d="M79 172.5 L148.9 109.3" stroke="#b9b2b8" stroke-width="7.2"/>
<path d="M79 172.5 L148.9 109.3" stroke="#ffffff" stroke-width="6"/>
<g fill="none" stroke="#d9a85e" stroke-linejoin="round">
 <path d="M45 -2 L35.8 119.5 H123 V44 L150 4" stroke-width="8.8"/>
</g>
<circle cx="35.8" cy="119.5" r="7" fill="#d9a85e"/><circle cx="124" cy="122" r="8" fill="#d9a85e"/>
<g fill="none" stroke="#f6c986" stroke-linejoin="round">
 <path d="M45 -2 L35.8 119.5 H123 V44 L150 4" stroke-width="7.4"/>
</g>
<circle cx="35.8" cy="119.5" r="6.3" fill="#f6c986"/><circle cx="124" cy="122" r="7.3" fill="#f6c986"/>
<path d="M42.5 2 L35 100" stroke="#b08a55" stroke-width="0.5" opacity="0.7"/>
<circle cx="35.8" cy="119.5" r="1.5" fill="#9bd08a"/>
<circle cx="124" cy="122" r="3" fill="#c9cfe0"/>
<path d="M31 36 V45 M49 36 V45" stroke="#e88a7a" stroke-width="0.7"/>
<circle cx="104.4" cy="106.7" r="4.9" fill="#c0262d"/><circle cx="104.4" cy="106.7" r="3.5" fill="#fff"/><path d="M104.4 104.6 V108.8 M102.3 106.7 H106.5" stroke="#c0262d" stroke-width="1.4"/>
<path d="M75 85.3 C73 78 66.5 74.5 66.5 72 A8.3 8.3 0 0 1 83.1 72 C83.1 74.5 77 78 75 85.3 Z" fill="#2f7bc6"/>
<path d="M75 85.3 C73 78 66.5 74.5 66.5 72 A8.3 8.3 0 0 1 75 63.7 Z" fill="#5aa0e0" opacity="0.45"/>
<ellipse cx="75" cy="71.5" rx="2.4" ry="1.9" fill="#fff"/>
<path transform="translate(73 6)" d="M0.40 -3.06 H3.56 M1.98 -3.57 V-0.01 M3.55 -2.85 V-0.57 M0.92 -0.85 H3.03 M0.79 -2.43 V-0.72 M5.09 -3.06 H8.25 M6.67 -3.57 V-0.01 M5.35 -0.95 H8.42 M7.93 -2.68 V-0.26 M6.49 -2.50 V-0.55 M9.78 -3.06 H12.94 M11.36 -3.57 V-0.01 M10.55 -2.59 V-0.69 M10.24 -0.52 H12.58 M10.77 -2.35 V-0.38 M14.47 -3.06 H17.64 M16.05 -3.57 V-0.01 M15.14 -0.48 H17.78 M15.97 -2.63 V-0.15 M14.30 -1.18 H17.43" fill="none" stroke="#2a2530" stroke-width="0.55"/><path transform="translate(72 9)" d="M0.40 -3.06 H3.56 M1.98 -3.57 V-0.01 M3.55 -2.85 V-0.57 M0.92 -0.85 H3.03 M0.79 -2.43 V-0.72 M5.09 -3.06 H8.25 M6.67 -3.57 V-0.01 M5.35 -0.95 H8.42 M7.93 -2.68 V-0.26 M6.49 -2.50 V-0.55 M9.78 -3.06 H12.94 M11.36 -3.57 V-0.01 M12.80 -2.61 V-0.54 M10.07 -1.24 H12.59 M12.37 -2.65 V-0.37 M14.47 -3.06 H17.64 M16.05 -3.57 V-0.01 M15.14 -0.48 H17.78 M15.97 -2.63 V-0.15 M14.30 -1.18 H17.43" fill="none" stroke="#2a2530" stroke-width="0.55"/><path transform="translate(109 6)" d="M0.40 -3.06 H3.56 M1.98 -3.57 V-0.01 M3.55 -2.85 V-0.57 M0.92 -0.85 H3.03 M0.79 -2.43 V-0.72 M5.09 -3.06 H8.25 M6.67 -3.57 V-0.01 M5.35 -0.95 H8.42 M7.93 -2.68 V-0.26 M6.49 -2.50 V-0.55 M9.78 -3.06 H12.94 M11.36 -3.57 V-0.01 M10.55 -2.59 V-0.69 M10.24 -0.52 H12.58 M10.77 -2.35 V-0.38 M14.47 -3.06 H17.64 M16.05 -3.57 V-0.01 M15.14 -0.48 H17.78 M15.97 -2.63 V-0.15 M14.30 -1.18 H17.43" fill="none" stroke="#2a2530" stroke-width="0.55"/><path transform="translate(109 14)" d="M0.40 -3.06 H3.56 M1.98 -3.57 V-0.01 M3.55 -2.85 V-0.57 M0.92 -0.85 H3.03 M0.79 -2.43 V-0.72 M5.09 -3.06 H8.25 M6.67 -3.57 V-0.01 M5.35 -0.95 H8.42 M7.93 -2.68 V-0.26 M6.49 -2.50 V-0.55 M9.78 -3.06 H12.94 M11.36 -3.57 V-0.01 M10.87 -2.80 V-0.51 M9.71 -1.57 H12.40 M10.03 -2.40 V-0.69 M14.47 -3.06 H17.64 M16.05 -3.57 V-0.01 M15.14 -0.48 H17.78 M15.97 -2.63 V-0.15 M14.30 -1.18 H17.43" fill="none" stroke="#2a2530" stroke-width="0.55"/><path transform="translate(63 29)" d="M0.40 -3.06 H3.56 M1.98 -3.57 V-0.01 M3.55 -2.85 V-0.57 M0.92 -0.85 H3.03 M0.79 -2.43 V-0.72 M5.09 -3.06 H8.25 M6.67 -3.57 V-0.01 M5.35 -0.95 H8.42 M7.93 -2.68 V-0.26 M6.49 -2.50 V-0.55 M9.78 -3.06 H12.94 M11.36 -3.57 V-0.01 M9.95 -0.49 H13.07 M9.72 -2.02 H12.69 M9.81 -1.69 H12.66 M14.47 -3.06 H17.64 M16.05 -3.57 V-0.01 M15.14 -0.48 H17.78 M15.97 -2.63 V-0.15 M14.30 -1.18 H17.43" fill="none" stroke="#2a2530" stroke-width="0.55"/><path transform="translate(76 47)" d="M0.41 -3.19 H3.72 M2.06 -3.73 V-0.01 M0.32 -1.43 H3.19 M1.34 -2.76 V-0.19 M0.44 -2.64 V-0.28 M5.31 -3.19 H8.61 M6.96 -3.73 V-0.01 M5.69 -2.43 H8.19 M5.52 -0.52 H8.61 M8.18 -2.53 V-0.06 M10.20 -3.19 H13.51 M11.86 -3.73 V-0.01 M13.14 -2.30 V-0.43 M12.41 -2.53 V-0.33 M11.82 -2.59 V-0.81 M15.10 -3.19 H18.40 M16.75 -3.73 V-0.01 M15.83 -0.98 H18.15 M15.52 -2.81 V-0.30 M16.38 -2.32 V-0.31" fill="none" stroke="#2a2530" stroke-width="0.6"/><path transform="translate(139 47)" d="M0.41 -3.19 H3.72 M2.06 -3.73 V-0.01 M0.32 -1.43 H3.19 M1.34 -2.76 V-0.19 M0.44 -2.64 V-0.28 M5.31 -3.19 H8.61 M6.96 -3.73 V-0.01 M5.69 -2.43 H8.19 M5.52 -0.52 H8.61 M8.18 -2.53 V-0.06" fill="none" stroke="#2a2530" stroke-width="0.6"/><path transform="translate(0 66)" d="M0.40 -3.06 H3.56 M1.98 -3.57 V-0.01 M1.17 -0.31 H2.97 M0.55 -2.03 H3.34 M0.40 -0.81 H3.52 M5.09 -3.06 H8.25 M6.67 -3.57 V-0.01 M5.22 -2.02 H7.99 M7.18 -2.27 V-0.34 M4.92 -2.15 H7.50 M9.78 -3.06 H12.94 M11.36 -3.57 V-0.01 M10.45 -0.48 H13.08 M11.28 -2.63 V-0.15 M9.61 -1.18 H12.74" fill="none" stroke="#2a2530" stroke-width="0.55"/><path transform="translate(54 106)" d="M0.40 -3.06 H3.56 M1.98 -3.57 V-0.01 M2.36 -2.79 V-0.12 M3.43 -2.39 V-0.69 M2.03 -2.93 V-0.24 M5.09 -3.06 H8.25 M6.67 -3.57 V-0.01 M5.14 -1.77 H7.60 M7.48 -2.97 V0.01 M6.21 -2.90 V-0.25 M9.78 -3.06 H12.94 M11.36 -3.57 V-0.01 M9.95 -0.49 H13.07 M9.72 -2.02 H12.69 M9.81 -1.69 H12.66 M14.47 -3.06 H17.64 M16.05 -3.57 V-0.01 M15.14 -0.48 H17.78 M15.97 -2.63 V-0.15 M14.30 -1.18 H17.43" fill="none" stroke="#2a2530" stroke-width="0.55"/><path transform="translate(76 123)" d="M0.41 -3.19 H3.72 M2.06 -3.73 V-0.01 M1.13 -2.25 H3.05 M1.12 -0.93 H3.89 M3.67 -2.52 V-0.05 M5.31 -3.19 H8.61 M6.96 -3.73 V-0.01 M7.99 -2.82 V0.06 M5.34 -1.23 H8.60 M5.14 -1.61 H8.64 M10.20 -3.19 H13.51 M11.86 -3.73 V-0.01 M10.22 -2.45 H12.88 M11.55 -2.94 V-0.75 M10.57 -1.93 H12.82" fill="none" stroke="#2a2530" stroke-width="0.6"/><path transform="translate(90 146)" d="M0.40 -3.06 H3.56 M1.98 -3.57 V-0.01 M3.39 -2.54 V-0.64 M3.30 -2.22 V-0.25 M1.52 -2.80 V-0.01 M5.09 -3.06 H8.25 M6.67 -3.57 V-0.01 M5.71 -1.54 H7.61 M5.02 -1.93 H8.18 M7.34 -2.50 V-0.10 M9.78 -3.06 H12.94 M11.36 -3.57 V-0.01 M10.55 -2.59 V-0.69 M10.24 -0.52 H12.58 M10.77 -2.35 V-0.38 M14.47 -3.06 H17.64 M16.05 -3.57 V-0.01 M15.14 -0.48 H17.78 M15.97 -2.63 V-0.15 M14.30 -1.18 H17.43" fill="none" stroke="#2a2530" stroke-width="0.55"/><path transform="translate(44 158)" d="M0.40 -3.06 H3.56 M1.98 -3.57 V-0.01 M3.39 -2.54 V-0.64 M3.30 -2.22 V-0.25 M1.52 -2.80 V-0.01 M5.09 -3.06 H8.25 M6.67 -3.57 V-0.01 M5.71 -1.54 H7.61 M5.02 -1.93 H8.18 M7.34 -2.50 V-0.10 M9.78 -3.06 H12.94 M11.36 -3.57 V-0.01 M10.45 -2.36 H12.66 M9.66 -0.87 H12.94 M9.92 -1.59 H12.48 M14.47 -3.06 H17.64 M16.05 -3.57 V-0.01 M15.14 -0.48 H17.78 M15.97 -2.63 V-0.15 M14.30 -1.18 H17.43" fill="none" stroke="#2a2530" stroke-width="0.55"/><path transform="translate(84 71)" d="M0.45 -3.46 H4.02 M2.24 -4.04 V-0.02 M3.33 -2.83 V-0.81 M0.70 -2.58 H3.23 M0.58 -0.86 H3.30 M5.75 -3.46 H9.33 M7.54 -4.04 V-0.02 M7.19 -2.52 V-0.08 M5.62 -1.13 H9.38 M6.05 -1.42 H9.49 M11.06 -3.46 H14.63 M12.84 -4.04 V-0.02 M10.98 -1.55 H13.85 M10.96 -2.44 H14.05 M11.33 -2.98 V-0.48 M16.36 -3.46 H19.94 M18.15 -4.04 V-0.02 M16.80 -1.46 H20.07 M16.77 -2.05 H19.58 M19.51 -3.16 V-0.15" fill="none" stroke="#7a7280" stroke-width="0.5"/><path transform="translate(84 78)" d="M0.45 -3.46 H4.02 M2.24 -4.04 V-0.02 M0.47 -1.33 H3.41 M3.31 -3.17 V-0.37 M1.83 -2.52 V-0.75 M5.75 -3.46 H9.33 M7.54 -4.04 V-0.02 M5.64 -1.78 H9.08 M5.77 -1.69 H8.82 M7.14 -3.34 V-0.06 M11.06 -3.46 H14.63 M12.84 -4.04 V-0.02 M12.19 -3.05 V-0.21 M13.36 -2.71 V-0.76 M11.70 -0.67 H13.76" fill="none" stroke="#7a7280" stroke-width="0.5"/><path transform="translate(84 85)" d="M0.45 -3.46 H4.02 M2.24 -4.04 V-0.02 M0.33 -2.23 H3.55 M1.29 -2.99 V-0.65 M0.80 -1.67 H3.66 M5.75 -3.46 H9.33 M7.54 -4.04 V-0.02 M6.24 -2.07 H9.03 M5.90 -0.64 H8.61 M6.26 -0.44 H8.55 M11.06 -3.46 H14.63 M12.84 -4.04 V-0.02 M13.53 -2.55 V-0.29 M12.69 -2.62 V-0.83 M11.67 -0.68 H14.24 M16.36 -3.46 H19.94 M18.15 -4.04 V-0.02 M16.17 -2.32 H19.60 M18.26 -2.94 V-0.71 M16.33 -0.65 H19.69" fill="none" stroke="#7a7280" stroke-width="0.5"/><path transform="translate(31 25)" d="M0.38 -2.93 H3.41 M1.89 -3.42 V-0.01 M2.01 -2.13 V-0.60 M1.13 -2.71 V-0.34 M0.85 -1.17 H3.17 M4.87 -2.93 H7.89 M6.38 -3.42 V-0.01 M5.59 -0.62 H7.59 M5.34 -1.09 H7.99 M4.87 -2.62 V-0.43" fill="none" stroke="#2f4fa8" stroke-width="0.6"/><path transform="translate(44 48) rotate(-90)" d="M0.41 -3.19 H3.72 M2.06 -3.73 V-0.01 M0.52 -0.80 H2.90 M1.09 -3.04 V0.04 M0.30 -1.18 H3.09 M5.31 -3.19 H8.61 M6.96 -3.73 V-0.01 M5.44 -1.93 H8.43 M7.95 -2.69 V-0.29 M7.72 -2.57 V-0.21 M10.20 -3.19 H13.51 M11.86 -3.73 V-0.01 M13.14 -2.30 V-0.43 M12.41 -2.53 V-0.33 M11.82 -2.59 V-0.81 M15.10 -3.19 H18.40 M16.75 -3.73 V-0.01 M15.83 -0.98 H18.15 M15.52 -2.81 V-0.30 M16.38 -2.32 V-0.31" fill="none" stroke="#2a2530" stroke-width="0.6"/><path transform="translate(38.5 112) rotate(-90)" d="M0.41 -3.19 H3.72 M2.06 -3.73 V-0.01 M0.52 -0.80 H2.90 M1.09 -3.04 V0.04 M0.30 -1.18 H3.09 M5.31 -3.19 H8.61 M6.96 -3.73 V-0.01 M5.44 -1.93 H8.43 M7.95 -2.69 V-0.29 M7.72 -2.57 V-0.21 M10.20 -3.19 H13.51 M11.86 -3.73 V-0.01 M13.14 -2.30 V-0.43 M12.41 -2.53 V-0.33 M11.82 -2.59 V-0.81 M15.10 -3.19 H18.40 M16.75 -3.73 V-0.01 M15.83 -0.98 H18.15 M15.52 -2.81 V-0.30 M16.38 -2.32 V-0.31" fill="none" stroke="#2a2530" stroke-width="0.6"/><path transform="translate(127 102) rotate(-90)" d="M0.41 -3.19 H3.72 M2.06 -3.73 V-0.01 M3.64 -2.80 V-0.19 M1.07 -2.21 H3.80 M0.35 -0.32 H3.17 M5.31 -3.19 H8.61 M6.96 -3.73 V-0.01 M5.68 -2.43 V-0.20 M5.93 -1.32 H8.18 M5.12 -1.40 H8.39 M10.20 -3.19 H13.51 M11.86 -3.73 V-0.01 M10.22 -2.45 H12.88 M11.55 -2.94 V-0.75 M10.57 -1.93 H12.82" fill="none" stroke="#2a2530" stroke-width="0.6"/><path transform="translate(140 28) rotate(-55)" d="M0.41 -3.19 H3.72 M2.06 -3.73 V-0.01 M3.64 -2.80 V-0.19 M1.07 -2.21 H3.80 M0.35 -0.32 H3.17 M5.31 -3.19 H8.61 M6.96 -3.73 V-0.01 M5.68 -2.43 V-0.20 M5.93 -1.32 H8.18 M5.12 -1.40 H8.39 M10.20 -3.19 H13.51 M11.86 -3.73 V-0.01 M10.22 -2.45 H12.88 M11.55 -2.94 V-0.75 M10.57 -1.93 H12.82" fill="none" stroke="#2a2530" stroke-width="0.6"/><path transform="translate(11 26) rotate(-42)" d="M0.40 -3.06 H3.56 M1.98 -3.57 V-0.01 M3.16 -2.62 V-0.39 M1.13 -2.43 V-0.27 M0.28 -1.23 H3.44 M5.09 -3.06 H8.25 M6.67 -3.57 V-0.01 M5.49 -1.50 H7.48 M4.98 -0.73 H8.15 M8.12 -2.72 V-0.53 M9.78 -3.06 H12.94 M11.36 -3.57 V-0.01 M9.79 -2.34 H12.34 M11.07 -2.81 V-0.72 M10.13 -1.85 H12.28" fill="none" stroke="#2a2530" stroke-width="0.55"/><path transform="translate(55 60) rotate(90)" d="M0.40 -3.06 H3.56 M1.98 -3.57 V-0.01 M2.36 -2.79 V-0.12 M3.43 -2.39 V-0.69 M2.03 -2.93 V-0.24 M5.09 -3.06 H8.25 M6.67 -3.57 V-0.01 M5.14 -1.77 H7.60 M7.48 -2.97 V0.01 M6.21 -2.90 V-0.25 M9.78 -3.06 H12.94 M11.36 -3.57 V-0.01 M12.80 -2.61 V-0.54 M10.07 -1.24 H12.59 M12.37 -2.65 V-0.37 M14.47 -3.06 H17.64 M16.05 -3.57 V-0.01 M15.14 -0.48 H17.78 M15.97 -2.63 V-0.15 M14.30 -1.18 H17.43" fill="none" stroke="#2a2530" stroke-width="0.55"/><path transform="translate(16.5 128) rotate(-90)" d="M0.40 -3.06 H3.56 M1.98 -3.57 V-0.01 M0.42 -2.60 V0.04 M3.29 -2.81 V-0.76 M0.27 -1.71 H3.46 M5.09 -3.06 H8.25 M6.67 -3.57 V-0.01 M5.79 -0.94 H8.00 M5.49 -2.69 V-0.28 M6.31 -2.22 V-0.30 M9.78 -3.06 H12.94 M11.36 -3.57 V-0.01 M9.83 -2.27 V-0.61 M10.33 -2.34 H12.75 M12.73 -2.29 V-0.56" fill="none" stroke="#2a2530" stroke-width="0.55"/><path transform="translate(36 160) rotate(-90)" d="M0.40 -3.06 H3.56 M1.98 -3.57 V-0.01 M0.50 -0.77 H2.78 M1.05 -2.91 V0.04 M0.29 -1.13 H2.96 M5.09 -3.06 H8.25 M6.67 -3.57 V-0.01 M5.22 -1.85 H8.08 M7.62 -2.58 V-0.28 M7.40 -2.46 V-0.20 M9.78 -3.06 H12.94 M11.36 -3.57 V-0.01 M12.59 -2.21 V-0.41 M11.90 -2.42 V-0.31 M11.33 -2.48 V-0.78 M14.47 -3.06 H17.64 M16.05 -3.57 V-0.01 M15.18 -0.94 H17.39 M14.87 -2.69 V-0.28 M15.70 -2.22 V-0.30" fill="none" stroke="#2a2530" stroke-width="0.55"/><path transform="translate(90 166) rotate(-42)" d="M0.41 -3.19 H3.72 M2.06 -3.73 V-0.01 M3.71 -2.98 V-0.60 M0.96 -0.89 H3.17 M0.83 -2.54 V-0.76 M5.31 -3.19 H8.61 M6.96 -3.73 V-0.01 M7.34 -2.34 V-0.08 M6.46 -2.45 V-0.82 M5.70 -0.83 H7.81 M10.20 -3.19 H13.51 M11.86 -3.73 V-0.01 M13.14 -2.30 V-0.43 M12.41 -2.53 V-0.33 M11.82 -2.59 V-0.81 M15.10 -3.19 H18.40 M16.75 -3.73 V-0.01 M15.83 -0.98 H18.15 M15.52 -2.81 V-0.30 M16.38 -2.32 V-0.31" fill="none" stroke="#2a2530" stroke-width="0.6"/><path transform="translate(136 124) rotate(-42)" d="M0.41 -3.19 H3.72 M2.06 -3.73 V-0.01 M3.71 -2.98 V-0.60 M0.96 -0.89 H3.17 M0.83 -2.54 V-0.76 M5.31 -3.19 H8.61 M6.96 -3.73 V-0.01 M7.34 -2.34 V-0.08 M6.46 -2.45 V-0.82 M5.70 -0.83 H7.81 M10.20 -3.19 H13.51 M11.86 -3.73 V-0.01 M13.14 -2.30 V-0.43 M12.41 -2.53 V-0.33 M11.82 -2.59 V-0.81" fill="none" stroke="#2a2530" stroke-width="0.6"/>
</svg></div>
</body></html>
